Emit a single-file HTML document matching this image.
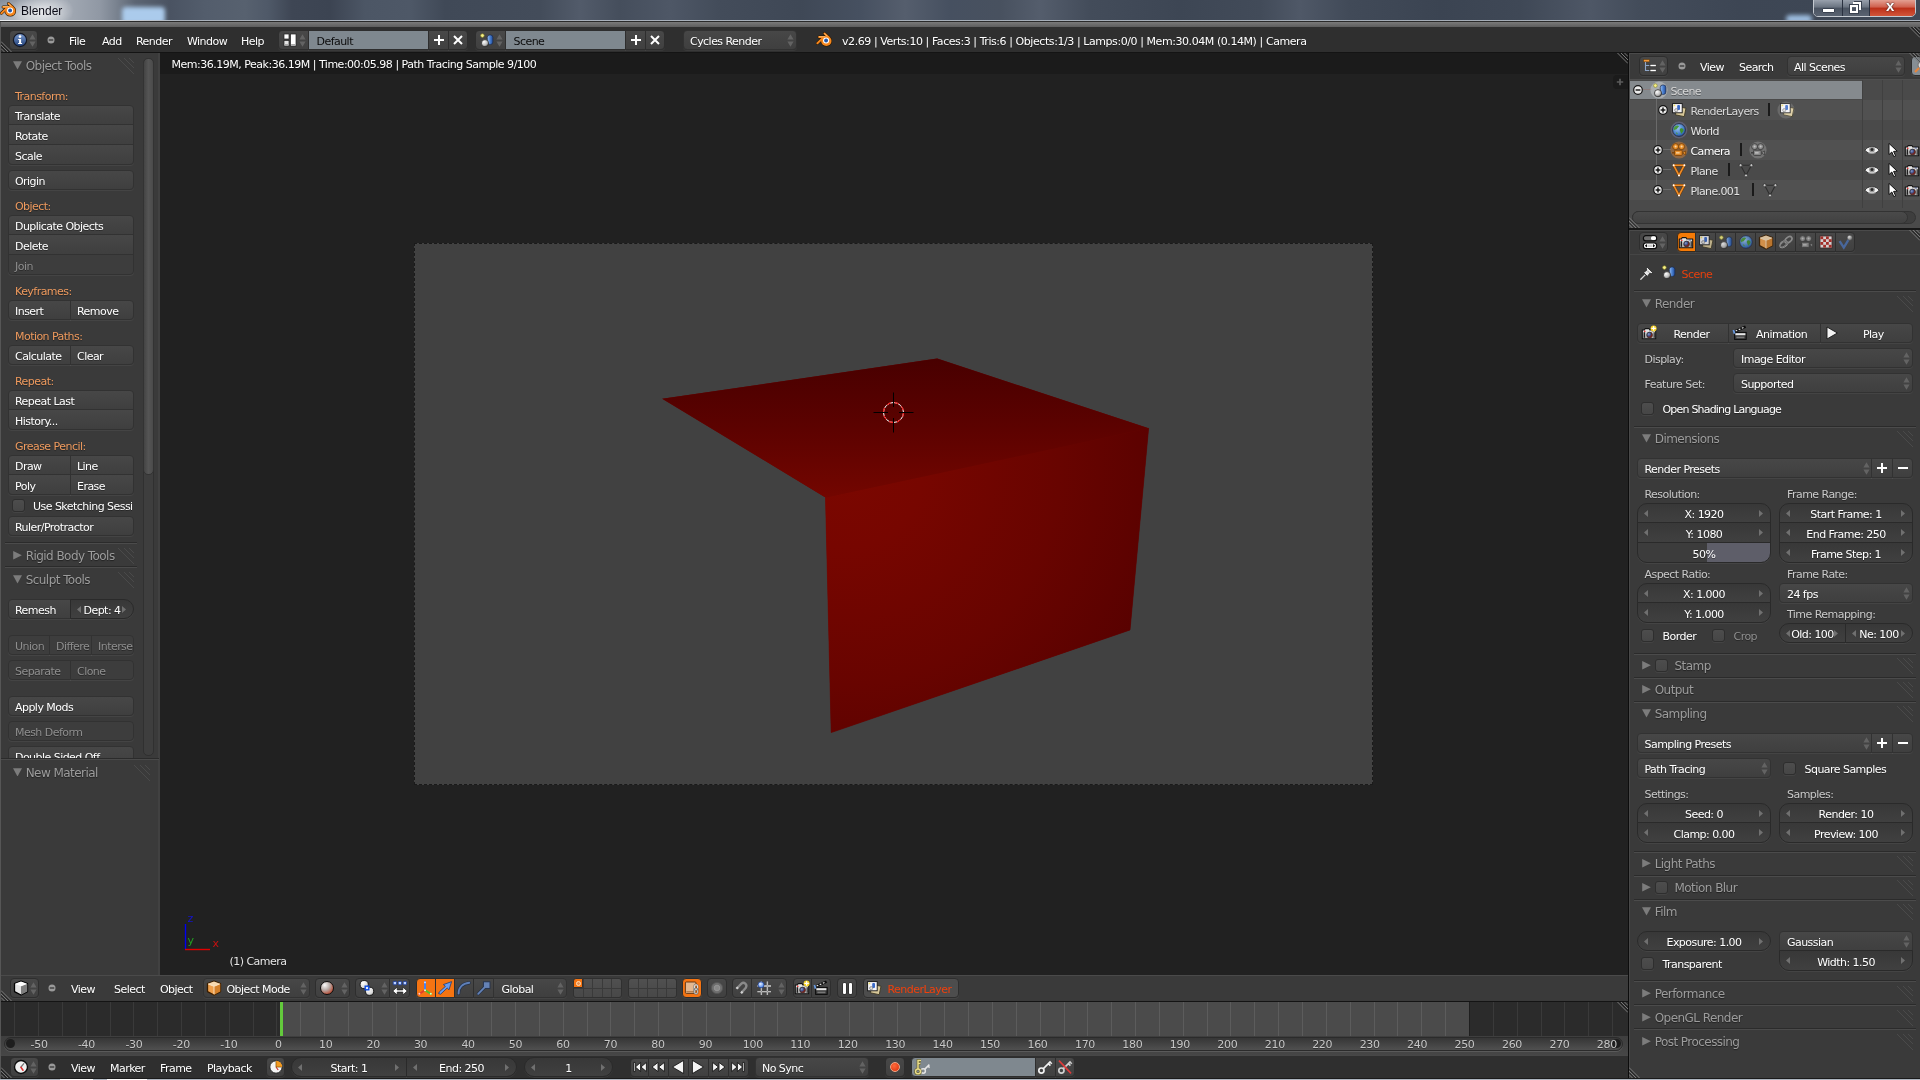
<!DOCTYPE html>
<html><head><meta charset="utf-8"><title>Blender</title>
<style>
html,body{margin:0;padding:0}
body{width:1920px;height:1080px;overflow:hidden;background:#3a3a3a;position:relative;font-family:"DejaVu Sans","Liberation Sans",sans-serif;font-size:11px;letter-spacing:-0.54px;color:#fff}
div,span,svg{position:absolute;box-sizing:border-box}
.t{white-space:pre;line-height:14px;color:#fff;text-shadow:0 1px 0 rgba(0,0,0,.35)}
.g{color:#8e8e8e}
.lab{color:#ee9a5e;text-shadow:0 1px 1px rgba(0,0,0,.4)}
.lg{color:#c9c9c9}
.pt{font-size:12px;color:#9c9c9c;letter-spacing:-0.55px;text-shadow:0 1px 1px rgba(0,0,0,.45)}
.b{border:1px solid #323232;background:linear-gradient(#474747,#3f3f3f);box-shadow:0 1px 0 rgba(255,255,255,.055);border-radius:4px}
.n{border:1px solid #2a2a2a;background:linear-gradient(#383838,#404040);box-shadow:0 1px 0 rgba(255,255,255,.055);border-radius:10px}
.hb{border:1px solid #2e2e2e;background:linear-gradient(#484848,#404040);box-shadow:0 1px 0 rgba(255,255,255,.05);border-radius:4px}
.cb{border:1px solid #2e2e2e;background:linear-gradient(#4d4d4d,#464646);box-shadow:0 1px 0 rgba(255,255,255,.05);border-radius:3px;width:13px;height:13px}
.dk{color:#0c0c0c;text-shadow:none}
.tight{letter-spacing:-0.8px}
.red{color:#f0400c;text-shadow:none}
.sep{height:2px;border-top:1px solid #2b2b2b;background:#4b4b4b}
</style></head>
<body>
<div id="root" style="left:0;top:0;width:1920px;height:1080px;will-change:transform">
<div style="left:0px;top:0px;width:1920px;height:20px;background:linear-gradient(90deg,#a9b0b9 0px,#b6bcc4 20px,#a6adb7 60px,#9098a4 100px,#7a8390 116px,#5c6573 135px,#4a5362 170px,#535d6c 205px,#57616f 245px,#4f5968 268px,#3e4654 292px,#3c4452 330px,#4c5665 365px,#4e5867 410px,#404957 445px,#414a58 480px,#434c5a 540px,#525b6a 580px,#454e5c 620px,#4e5766 670px,#434c5a 720px,#3f4856 800px,#465060 860px,#555e6d 905px,#465060 950px,#48515f 1000px,#545d6c 1040px,#434c5a 1090px,#3d4654 1180px,#424b59 1260px,#4f5867 1300px,#414a58 1350px,#3b4452 1440px,#3f4856 1520px,#4e5766 1590px,#434c5a 1640px,#3d4654 1740px,#3f4856 1920px)"></div>
<div style="left:10px;top:-8px;width:64px;height:38px;background:radial-gradient(closest-side,rgba(255,255,255,.8),rgba(255,255,255,.35) 60%,rgba(255,255,255,0));"></div>
<div style="left:122px;top:7px;width:43px;height:17px;background:#abcbec;filter:blur(2.2px);border-radius:4px"></div>
<div style="left:1786px;top:15px;width:26px;height:8px;background:#9dbde0;filter:blur(2px);border-radius:4px"></div>
<div style="left:0px;top:0px;width:70px;height:14px;background:linear-gradient(rgba(60,70,92,.34),rgba(60,70,92,0));-webkit-mask-image:linear-gradient(90deg,#000,transparent);mask-image:linear-gradient(90deg,#000,transparent)"></div>
<svg style="left:0px;top:2.2px" width="16" height="16" viewBox="0 0 16 16"><path d="M8.5 1.6L12.6 5.2M3.1 4.9H9.4M7.4 5.4L1.4 11.2" fill="none" stroke="#2a1800" stroke-width="3" stroke-linecap="round" stroke-linejoin="round"/><ellipse cx="10.3" cy="9" rx="5.8" ry="5.6" fill="#2a1800"/><path d="M8.5 1.6L12.6 5.2M3.1 4.9H9.4M7.4 5.4L1.4 11.2" fill="none" stroke="#f6871e" stroke-width="2" stroke-linecap="round" stroke-linejoin="round"/><ellipse cx="10.3" cy="9" rx="5.2" ry="5" fill="#f6871e"/><path d="M3.3 4.7H8.6M8.6 1.9L11 4" stroke="#fbc078" stroke-width="0.9" stroke-linecap="round"/><circle cx="10.1" cy="8.5" r="3.05" fill="#fff"/><circle cx="10.1" cy="8.5" r="1.95" fill="#2458a8"/></svg>
<span style="left:21px;top:3.5px;font-family:'Liberation Sans',sans-serif;font-size:12px;letter-spacing:0;color:#0b0b16;line-height:14px;white-space:pre">Blender</span>
<div style="left:1813px;top:-1px;width:103px;height:18px;border:1px solid #c4c9d0;border-radius:0 0 5px 5px;background:#2a3140"></div>
<div style="left:1814px;top:0px;width:28px;height:16px;background:linear-gradient(#98a0ac,#6a7380 45%,#4a5361 50%,#5a6371);border-radius:0 0 0 4px"></div>
<div style="left:1843px;top:0px;width:26px;height:16px;background:linear-gradient(#98a0ac,#6a7380 45%,#4a5361 50%,#5a6371)"></div>
<div style="left:1870px;top:0px;width:45px;height:16px;background:linear-gradient(#e3a092,#cf5f4c 45%,#bb2f18 50%,#d2553a);border-radius:0 0 4px 0"></div>
<div style="left:1822px;top:8px;width:13px;height:5px;background:#fff;border:1px solid #3a4250;border-radius:1px"></div>
<div style="left:1850px;top:5px;width:8px;height:8px;border:2px solid #fff;box-shadow:0 0 0 1px #3a4250"></div>
<div style="left:1853px;top:2px;width:8px;height:8px;border:2px solid #fff;border-left:none;border-bottom:none;box-shadow:1px -1px 0 0 #3a4250"></div>
<span style="left:1886px;top:-2px;font-family:'Liberation Sans',sans-serif;font-weight:bold;font-size:15px;letter-spacing:0;color:#fff;line-height:16px;text-shadow:0 0 2px #422,0 0 1px #422">x</span>
<div style="left:0px;top:20px;width:1920px;height:1px;background:linear-gradient(90deg,#eceef0,#e4e7ea 90px,#aab2bc 180px,#a3abb5)"></div>
<div style="left:0px;top:21px;width:1920px;height:1px;background:#2a2a2a"></div>
<div style="left:0px;top:22px;width:1920px;height:5px;background:linear-gradient(#7a7a7a,#5e5e5e)"></div>
<div style="left:0px;top:27px;width:1920px;height:25px;background:#2f2f2f"></div>
<div style="left:0px;top:52px;width:1920px;height:1px;background:#141414"></div>
<div style="left:0px;top:27px;width:1px;height:26px;background:#555"></div>
<div class="hb" style="left:9px;top:30px;width:29px;height:20px;"></div>
<svg style="left:29px;top:34px" width="7" height="13" viewBox="0 0 7 13"><path d="M3.5 0.2L6.6 5.4H0.4Z M3.5 12.8L6.6 7.6H0.4Z" fill="#636363"/></svg>
<svg style="left:12px;top:32px" width="16" height="16" viewBox="0 0 16 16"><defs><linearGradient id="g1" x1="0" y1="0" x2="0" y2="1"><stop offset="0" stop-color="#7b9bd0"/><stop offset="1" stop-color="#1f3f78"/></linearGradient></defs><circle cx="8" cy="8" r="6.6" fill="url(#g1)" stroke="#141824" stroke-width="1.2"/><circle cx="8" cy="4.6" r="1.3" fill="#fff"/><path d="M6.2 6.9H9.1V10.9H10.1V12H6.1V10.9H7.1V8H6.2Z" fill="#fff"/></svg>
<svg style="left:47px;top:36px" width="8" height="8" viewBox="0 0 8 8"><circle cx="4" cy="4" r="3.5" fill="#9a9a9a"/><rect x="1.8" y="3.4" width="4.4" height="1.2" fill="#2e2e2e"/></svg>
<span class="t" style="left:69px;top:34.8px;">File</span>
<span class="t" style="left:102px;top:34.8px;">Add</span>
<span class="t" style="left:136px;top:34.8px;">Render</span>
<span class="t" style="left:187px;top:34.8px;">Window</span>
<span class="t" style="left:241px;top:34.8px;">Help</span>
<div class="hb" style="left:278px;top:30px;width:31px;height:20px;border-radius:4px 0 0 4px;"></div>
<svg style="left:299px;top:34px" width="7" height="13" viewBox="0 0 7 13"><path d="M3.5 0.2L6.6 5.4H0.4Z M3.5 12.8L6.6 7.6H0.4Z" fill="#636363"/></svg>
<svg style="left:282px;top:32px" width="16" height="16" viewBox="0 0 16 16"><rect x="2" y="2" width="5" height="5" fill="#fff" stroke="#222" stroke-width="0.7"/><rect x="2" y="8.5" width="5" height="5.5" fill="#e4e4e4" stroke="#222" stroke-width="0.7"/><rect x="2.6" y="12" width="3.8" height="1.4" fill="#aaa"/><rect x="8.5" y="2" width="5.5" height="12" fill="#fff" stroke="#222" stroke-width="0.7"/><rect x="9.1" y="12" width="4.3" height="1.4" fill="#aaa"/></svg>
<div class="hb" style="left:308px;top:30px;width:121px;height:20px;background:#7f888f;border-radius:0;"></div>
<span class="t dk" style="left:316.5px;top:34.8px;">Default</span>
<div class="hb" style="left:428px;top:30px;width:21px;height:20px;border-radius:0;"></div>
<div class="hb" style="left:448px;top:30px;width:20px;height:20px;border-radius:0 4px 4px 0;"></div>
<svg style="left:432.5px;top:34px" width="12" height="12" viewBox="0 0 12 12"><path d="M6 1V11M1 6H11" stroke="#fff" stroke-width="2"/></svg>
<svg style="left:452px;top:34px" width="12" height="12" viewBox="0 0 12 12"><path d="M2 2L10 10M10 2L2 10" stroke="#fff" stroke-width="2"/></svg>
<div class="hb" style="left:475px;top:30px;width:31px;height:20px;border-radius:4px 0 0 4px;"></div>
<svg style="left:496px;top:34px" width="7" height="13" viewBox="0 0 7 13"><path d="M3.5 0.2L6.6 5.4H0.4Z M3.5 12.8L6.6 7.6H0.4Z" fill="#636363"/></svg>
<svg style="left:478.5px;top:32px" width="16" height="16" viewBox="0 0 16 16"><defs><radialGradient id="g2" cx="0.35" cy="0.3" r="0.8"><stop offset="0" stop-color="#fff"/><stop offset="0.6" stop-color="#bbb"/><stop offset="1" stop-color="#444"/></radialGradient><linearGradient id="g3" x1="0" y1="0" x2="1" y2="0"><stop offset="0" stop-color="#9cc0f0"/><stop offset="0.5" stop-color="#4a80d0"/><stop offset="1" stop-color="#1f4a9a"/></linearGradient></defs><rect x="8.3" y="3" width="5.6" height="9.4" rx="2.4" fill="url(#g3)" stroke="#1a2a4a" stroke-width="0.7"/><circle cx="6" cy="11.2" r="3.6" fill="url(#g2)" stroke="#222" stroke-width="0.7"/><circle cx="3.4" cy="3.6" r="1.8" fill="#f6f08a" stroke="#8a8420" stroke-width="0.6"/></svg>
<div class="hb" style="left:505px;top:30px;width:121px;height:20px;background:#7f888f;border-radius:0;"></div>
<span class="t dk" style="left:513.5px;top:34.8px;">Scene</span>
<div class="hb" style="left:625px;top:30px;width:21px;height:20px;border-radius:0;"></div>
<div class="hb" style="left:645px;top:30px;width:20px;height:20px;border-radius:0 4px 4px 0;"></div>
<svg style="left:629.5px;top:34px" width="12" height="12" viewBox="0 0 12 12"><path d="M6 1V11M1 6H11" stroke="#fff" stroke-width="2"/></svg>
<svg style="left:649px;top:34px" width="12" height="12" viewBox="0 0 12 12"><path d="M2 2L10 10M10 2L2 10" stroke="#fff" stroke-width="2"/></svg>
<div class="b" style="left:683px;top:30px;width:114px;height:20px;"></div>
<span class="t" style="left:690px;top:34.8px;">Cycles Render</span>
<svg style="left:787px;top:34.0px" width="7" height="13" viewBox="0 0 7 13"><path d="M3.5 0.2L6.6 5.4H0.4Z M3.5 12.8L6.6 7.6H0.4Z" fill="#636363"/></svg>
<svg style="left:816px;top:32px" width="16" height="16" viewBox="0 0 16 16"><path d="M8.5 1.6L12.6 5.2M3.1 4.9H9.4M7.4 5.4L1.4 11.2" fill="none" stroke="#2a1800" stroke-width="3" stroke-linecap="round" stroke-linejoin="round"/><ellipse cx="10.3" cy="9" rx="5.8" ry="5.6" fill="#2a1800"/><path d="M8.5 1.6L12.6 5.2M3.1 4.9H9.4M7.4 5.4L1.4 11.2" fill="none" stroke="#f6871e" stroke-width="2" stroke-linecap="round" stroke-linejoin="round"/><ellipse cx="10.3" cy="9" rx="5.2" ry="5" fill="#f6871e"/><path d="M3.3 4.7H8.6M8.6 1.9L11 4" stroke="#fbc078" stroke-width="0.9" stroke-linecap="round"/><circle cx="10.1" cy="8.5" r="3.05" fill="#fff"/><circle cx="10.1" cy="8.5" r="1.95" fill="#2458a8"/></svg>
<span class="t" style="left:842px;top:34.8px;letter-spacing:-0.43px">v2.69 | Verts:10 | Faces:3 | Tris:6 | Objects:1/3 | Lamps:0/0 | Mem:30.04M (0.14M) | Camera</span>
<div style="left:0px;top:53px;width:160px;height:922px;background:#3a3a3a"></div>
<div style="left:0px;top:53px;width:1px;height:922px;background:#555"></div>
<div style="left:158px;top:53px;width:2px;height:922px;background:#414141"></div>
<div style="left:143px;top:58px;width:11px;height:698px;border:1px solid #303030;border-radius:5px;background:#3e3e3e"></div>
<div style="left:143px;top:58px;width:11px;height:417px;background:linear-gradient(90deg,#444,#555 50%,#4a4a4a);border:1px solid #333;border-radius:5px"></div>
<svg style="left:13px;top:61px" width="9" height="8.6" viewBox="0 0 9 9" preserveAspectRatio="none"><path d="M0 0.2H9L4.5 8.9Z" fill="#7c7c7c"/></svg>
<span class="t pt" style="left:25.7px;top:59.3px;">Object Tools</span>
<svg style="left:118px;top:58px" width="16" height="16" viewBox="0 0 16 16"><path d="M0 0L16 16M6 0L16 10M11 0L16 5" stroke="#4a4a4a" stroke-width="1" fill="none"/></svg>
<span class="t lab" style="left:15px;top:89.8px;">Transform:</span>
<div class="b" style="left:8px;top:105px;width:126px;height:20px;border-radius:4px 4px 0 0;"></div>
<span class="t" style="left:15px;top:109.8px;">Translate</span>
<div class="b" style="left:8px;top:124px;width:126px;height:21px;border-radius:0;"></div>
<span class="t" style="left:15px;top:129.8px;">Rotate</span>
<div class="b" style="left:8px;top:144px;width:126px;height:21px;border-radius:0 0 4px 4px;"></div>
<span class="t" style="left:15px;top:149.8px;">Scale</span>
<div class="b" style="left:8px;top:170px;width:126px;height:20px;border-radius:4px;"></div>
<span class="t" style="left:15px;top:174.8px;">Origin</span>
<span class="t lab" style="left:15px;top:199.8px;">Object:</span>
<div class="b" style="left:8px;top:215px;width:126px;height:20px;border-radius:4px 4px 0 0;"></div>
<span class="t" style="left:15px;top:219.8px;">Duplicate Objects</span>
<div class="b" style="left:8px;top:234px;width:126px;height:21px;border-radius:0;"></div>
<span class="t" style="left:15px;top:239.8px;">Delete</span>
<div class="b" style="left:8px;top:254px;width:126px;height:21px;background:#3d3d3d;border-radius:0 0 4px 4px;"></div>
<span class="t g" style="left:15px;top:259.8px;">Join</span>
<span class="t lab" style="left:15px;top:284.8px;">Keyframes:</span>
<div class="b" style="left:8px;top:300px;width:63px;height:20px;border-radius:4px 0 0 4px;"></div>
<span class="t" style="left:15px;top:304.8px;">Insert</span>
<div class="b" style="left:70px;top:300px;width:64px;height:20px;border-radius:0 4px 4px 0;"></div>
<span class="t" style="left:77px;top:304.8px;">Remove</span>
<span class="t lab" style="left:15px;top:329.8px;">Motion Paths:</span>
<div class="b" style="left:8px;top:345px;width:63px;height:20px;border-radius:4px 0 0 4px;"></div>
<span class="t" style="left:15px;top:349.8px;">Calculate</span>
<div class="b" style="left:70px;top:345px;width:64px;height:20px;border-radius:0 4px 4px 0;"></div>
<span class="t" style="left:77px;top:349.8px;">Clear</span>
<span class="t lab" style="left:15px;top:374.8px;">Repeat:</span>
<div class="b" style="left:8px;top:390px;width:126px;height:20px;border-radius:4px 4px 0 0;"></div>
<span class="t" style="left:15px;top:394.8px;">Repeat Last</span>
<div class="b" style="left:8px;top:409px;width:126px;height:21px;border-radius:0 0 4px 4px;"></div>
<span class="t" style="left:15px;top:414.8px;">History...</span>
<span class="t lab" style="left:15px;top:439.8px;">Grease Pencil:</span>
<div class="b" style="left:8px;top:455px;width:63px;height:20px;border-radius:4px 0 0 0;"></div>
<span class="t" style="left:15px;top:459.8px;">Draw</span>
<div class="b" style="left:70px;top:455px;width:64px;height:20px;border-radius:0 4px 0 0;"></div>
<span class="t" style="left:77px;top:459.8px;">Line</span>
<div class="b" style="left:8px;top:474px;width:63px;height:21px;border-radius:0 0 0 4px;"></div>
<span class="t" style="left:15px;top:479.8px;">Poly</span>
<div class="b" style="left:70px;top:474px;width:64px;height:21px;border-radius:0 0 4px 0;"></div>
<span class="t" style="left:77px;top:479.8px;">Erase</span>
<div style="left:0;top:495px;width:132px;height:20px;overflow:hidden">
<div class="cb" style="left:12px;top:4px;width:13px;height:13px;"></div>
<span class="t" style="left:33px;top:4.800000000000001px;">Use Sketching Sessions</span>
</div>
<div class="b" style="left:8px;top:516px;width:126px;height:20px;border-radius:4px;"></div>
<span class="t" style="left:15px;top:520.8px;">Ruler/Protractor</span>
<div class="sep" style="left:5px;top:542px;width:132px;height:2px;"></div>
<svg style="left:13px;top:551px" width="9" height="8.6" viewBox="0 0 9 9" preserveAspectRatio="none"><path d="M0.2 0V9L8.9 4.5Z" fill="#7c7c7c"/></svg>
<span class="t pt" style="left:25.7px;top:549.3px;">Rigid Body Tools</span>
<svg style="left:118px;top:548px" width="16" height="16" viewBox="0 0 16 16"><path d="M0 0L16 16M6 0L16 10M11 0L16 5" stroke="#4a4a4a" stroke-width="1" fill="none"/></svg>
<div class="sep" style="left:5px;top:566px;width:132px;height:2px;"></div>
<svg style="left:13px;top:575px" width="9" height="8.6" viewBox="0 0 9 9" preserveAspectRatio="none"><path d="M0 0.2H9L4.5 8.9Z" fill="#7c7c7c"/></svg>
<span class="t pt" style="left:25.7px;top:573.3px;">Sculpt Tools</span>
<svg style="left:118px;top:572px" width="16" height="16" viewBox="0 0 16 16"><path d="M0 0L16 16M6 0L16 10M11 0L16 5" stroke="#4a4a4a" stroke-width="1" fill="none"/></svg>
<div class="b" style="left:8px;top:599px;width:63px;height:20px;border-radius:4px 0 0 4px;"></div>
<span class="t" style="left:15px;top:603.8px;">Remesh</span>
<div class="n" style="left:70px;top:599px;width:64px;height:20px;border-radius:0 10px 10px 0;"></div>
<span class="t" style="left:70px;top:603.8px;width:64px;text-align:center">Dept: 4</span>
<svg style="left:77px;top:605.5px" width="4" height="7" viewBox="0 0 4 7"><path d="M4 0L0 3.5L4 7Z" fill="#707070"/></svg>
<svg style="left:122px;top:605.5px" width="4" height="7" viewBox="0 0 4 7"><path d="M0 0L4 3.5L0 7Z" fill="#707070"/></svg>
<div class="b" style="left:8px;top:635px;width:42px;height:20px;background:#3d3d3d;border-radius:4px 0 0 4px;"></div>
<span class="t g" style="left:15px;top:639.8px;">Union</span>
<div class="b" style="left:49px;top:635px;width:43px;height:20px;background:#3d3d3d;border-radius:0;"></div>
<span class="t g" style="left:56px;top:639.8px;">Differe</span>
<div class="b" style="left:91px;top:635px;width:43px;height:20px;background:#3d3d3d;border-radius:0 4px 4px 0;"></div>
<span class="t g" style="left:98px;top:639.8px;">Interse</span>
<div class="b" style="left:8px;top:660px;width:63px;height:20px;background:#3d3d3d;border-radius:4px 0 0 4px;"></div>
<span class="t g" style="left:15px;top:664.8px;">Separate</span>
<div class="b" style="left:70px;top:660px;width:64px;height:20px;background:#3d3d3d;border-radius:0 4px 4px 0;"></div>
<span class="t g" style="left:77px;top:664.8px;">Clone</span>
<div class="b" style="left:8px;top:696px;width:126px;height:20px;border-radius:4px;"></div>
<span class="t" style="left:15px;top:700.8px;">Apply Mods</span>
<div class="b" style="left:8px;top:721px;width:126px;height:20px;background:#3d3d3d;border-radius:4px;"></div>
<span class="t g" style="left:15px;top:725.8px;">Mesh Deform</span>
<div style="left:0;top:740px;width:140px;height:18px;overflow:hidden">
<div class="b" style="left:8px;top:6px;width:126px;height:20px;"></div>
<span class="t" style="left:15px;top:10.8px;">Double Sided Off</span>
</div>
<div style="left:1px;top:758px;width:158px;height:1px;background:#2b2b2b"></div>
<div style="left:1px;top:759px;width:158px;height:1px;background:#4a4a4a"></div>
<svg style="left:13px;top:767.7px" width="9" height="8.6" viewBox="0 0 9 9" preserveAspectRatio="none"><path d="M0 0.2H9L4.5 8.9Z" fill="#7c7c7c"/></svg>
<span class="t pt" style="left:25.7px;top:766.0px;">New Material</span>
<svg style="left:134px;top:764.7px" width="16" height="16" viewBox="0 0 16 16"><path d="M0 0L16 16M6 0L16 10M11 0L16 5" stroke="#4a4a4a" stroke-width="1" fill="none"/></svg>
<div style="left:160px;top:53px;width:1468px;height:922px;background:#212121"></div>
<div style="left:160px;top:53px;width:1468px;height:21px;background:#1b1b1b"></div>
<span class="t" style="left:171.5px;top:57.8px;letter-spacing:-0.49px">Mem:36.19M, Peak:36.19M | Time:00:05.98 | Path Tracing Sample 9/100</span>
<div style="left:1628px;top:53px;width:1px;height:1026px;background:#0c0c0c"></div>
<div style="left:414px;top:243px;width:959px;height:542px;background:#414141;border:1px dashed #1a1a1a"></div>
<svg style="left:0;top:0" width="1920" height="1080" viewBox="0 0 1920 1080"><defs><linearGradient id="gt" gradientUnits="userSpaceOnUse" x1="900" y1="358" x2="900" y2="497"><stop offset="0" stop-color="#480000"/><stop offset="0.5" stop-color="#5c0200"/><stop offset="1" stop-color="#730600"/></linearGradient><radialGradient id="gf" gradientUnits="userSpaceOnUse" cx="845" cy="470" r="390"><stop offset="0" stop-color="#7b0700"/><stop offset="0.2" stop-color="#770600"/><stop offset="0.55" stop-color="#680400"/><stop offset="0.85" stop-color="#580100"/><stop offset="1" stop-color="#500000"/></radialGradient></defs><polygon points="662.2,398.8 937.2,358.5 1148.6,428.3 1130,630 831.2,732.6 825.5,497.5" fill="#6c0400"/><polygon points="825.5,497.5 1148.6,428.3 1130,630 831.2,732.6" fill="url(#gf)" stroke="url(#gf)" stroke-width="0.6"/><polygon points="662.2,398.8 937.2,358.5 1148.6,428.3 825.5,497.5" fill="url(#gt)"/><circle cx="893.5" cy="412.5" r="10" fill="none" stroke="#fff" stroke-width="1"/><circle cx="893.5" cy="412.5" r="10" fill="none" stroke="#f00" stroke-width="1" stroke-dasharray="4 4"/><path d="M873.5 412.5H888M899 412.5H913.5M893.5 392.5V407M893.5 418V432.5" stroke="#000" stroke-width="1"/><path d="M185.5 949V924" stroke="#0000f0" stroke-width="1.4"/><path d="M185 949.5H210" stroke="#e00000" stroke-width="1.4"/></svg>
<span class="t" style="left:187.5px;top:912px;color:#1414d0;text-shadow:none">z</span>
<span class="t" style="left:187.5px;top:934px;color:#22a022;text-shadow:none">y</span>
<span class="t" style="left:212.5px;top:936.7px;color:#c81010;text-shadow:none">x</span>
<span class="t" style="left:229.5px;top:954.8px;color:#e6e6e6">(1) Camera</span>
<div style="left:1613px;top:75px;width:15px;height:14px;background:#1b1b1b;border-radius:4px 0 0 4px"></div>
<svg style="left:1616px;top:78px" width="8" height="8" viewBox="0 0 8 8"><path d="M4 0.8V7.2M0.8 4H7.2" stroke="#5c5c5c" stroke-width="1.7"/></svg>
<div style="left:0px;top:975px;width:1628px;height:26px;background:#3a3a3a;border-top:1px solid #4a4a4a"></div>
<div style="left:0px;top:1001px;width:1628px;height:1px;background:#141414"></div>
<div class="hb" style="left:10px;top:978px;width:29px;height:20px;"></div>
<svg style="left:29.5px;top:982px" width="7" height="13" viewBox="0 0 7 13"><path d="M3.5 0.2L6.6 5.4H0.4Z M3.5 12.8L6.6 7.6H0.4Z" fill="#636363"/></svg>
<svg style="left:13px;top:980px" width="16" height="16" viewBox="0 0 16 16"><path d="M1.5 3.6L8 1.2L14.5 3.6V11.6L8 15L1.5 11.6Z" fill="#e4e4e4" stroke="#000" stroke-width="1.3" stroke-linejoin="round"/><path d="M8 6.2L14.3 3.8V11.4L8 14.7Z" fill="#7e7e7e"/><path d="M1.9 3.7L8 1.5L14.1 3.7L8 6.2Z" fill="#ffffff"/></svg>
<svg style="left:48px;top:984px" width="8" height="8" viewBox="0 0 8 8"><circle cx="4" cy="4" r="3.5" fill="#9a9a9a"/><rect x="1.8" y="3.4" width="4.4" height="1.2" fill="#2e2e2e"/></svg>
<span class="t" style="left:71px;top:982.8px;">View</span>
<span class="t" style="left:114px;top:982.8px;">Select</span>
<span class="t" style="left:160px;top:982.8px;">Object</span>
<div class="b" style="left:203px;top:978px;width:107px;height:20px;"></div>
<span class="t" style="left:226.5px;top:982.8px;">Object Mode</span>
<svg style="left:300px;top:982.0px" width="7" height="13" viewBox="0 0 7 13"><path d="M3.5 0.2L6.6 5.4H0.4Z M3.5 12.8L6.6 7.6H0.4Z" fill="#636363"/></svg>
<svg style="left:206.3px;top:980px" width="16" height="16" viewBox="0 0 16 16"><path d="M1.5 3.6L8 1.2L14.5 3.6V11.6L8 15L1.5 11.6Z" fill="#f0a04c" stroke="#3a1e00" stroke-width="1.3" stroke-linejoin="round"/><path d="M8 6.2L14.3 3.8V11.4L8 14.7Z" fill="#d4802a"/><path d="M1.9 3.7L8 1.5L14.1 3.7L8 6.2Z" fill="#f7d9b0"/><path d="M2.2 4L8 6.3L13.8 4M8 6.3V14.3" fill="none" stroke="#fbe6c8" stroke-width="0.9"/></svg>
<div class="hb" style="left:315px;top:978px;width:35px;height:20px;"></div>
<svg style="left:340.5px;top:982px" width="7" height="13" viewBox="0 0 7 13"><path d="M3.5 0.2L6.6 5.4H0.4Z M3.5 12.8L6.6 7.6H0.4Z" fill="#636363"/></svg>
<svg style="left:319px;top:980px" width="16" height="16" viewBox="0 0 16 16"><defs><radialGradient id="g4" cx="0.33" cy="0.28" r="0.85"><stop offset="0" stop-color="#fafafa"/><stop offset="0.45" stop-color="#b8aca8"/><stop offset="0.85" stop-color="#b8503a"/><stop offset="1" stop-color="#c8702a"/></radialGradient></defs><circle cx="8" cy="8" r="6.5" fill="url(#g4)" stroke="#0c0c0c" stroke-width="1"/></svg>
<div class="hb" style="left:355px;top:978px;width:35px;height:20px;border-radius:4px 0 0 4px;"></div>
<svg style="left:380.5px;top:982px" width="7" height="13" viewBox="0 0 7 13"><path d="M3.5 0.2L6.6 5.4H0.4Z M3.5 12.8L6.6 7.6H0.4Z" fill="#636363"/></svg>
<svg style="left:358.5px;top:980px" width="16" height="16" viewBox="0 0 16 16"><defs><radialGradient id="g5" cx="0.35" cy="0.3" r="0.8"><stop offset="0" stop-color="#fff"/><stop offset="0.7" stop-color="#d8d8d8"/><stop offset="1" stop-color="#999"/></radialGradient></defs><circle cx="5.2" cy="4.6" r="4.1" fill="url(#g5)" stroke="#111" stroke-width="0.9"/><circle cx="10.6" cy="11.3" r="4.1" fill="url(#g5)" stroke="#111" stroke-width="0.9"/><rect x="6.2" y="6.2" width="3.6" height="3.6" fill="#dfe9ff" stroke="#0a4ae0" stroke-width="1.4"/></svg>
<div class="hb" style="left:389px;top:978px;width:21px;height:20px;border-radius:0 4px 4px 0;"></div>
<svg style="left:391.5px;top:980px" width="16" height="16" viewBox="0 0 16 16"><rect x="1.2" y="1.4" width="3.4" height="3.4" rx="0.8" fill="#bcd2ff" stroke="#1a3a9a" stroke-width="0.9"/><rect x="6.2" y="1.4" width="3.4" height="3.4" rx="0.8" fill="#bcd2ff" stroke="#1a3a9a" stroke-width="0.9"/><rect x="11.2" y="1.4" width="3.4" height="3.4" rx="0.8" fill="#bcd2ff" stroke="#1a3a9a" stroke-width="0.9"/><path d="M0.8 11L5.2 7V9.9H10.8V7L15.2 11L10.8 15V12.1H5.2V15Z" fill="#fff" stroke="#1a1a1a" stroke-width="0.7" stroke-linejoin="round"/></svg>
<div class="hb" style="left:416px;top:978px;width:20px;height:20px;background:#f57412;border-radius:4px 0 0 4px;"></div>
<div class="hb" style="left:435px;top:978px;width:20px;height:20px;background:#f57412;border-radius:0;"></div>
<div class="hb" style="left:454px;top:978px;width:20px;height:20px;border-radius:0;"></div>
<div class="hb" style="left:473px;top:978px;width:21px;height:20px;border-radius:0;"></div>
<svg style="left:417px;top:980px" width="16" height="16" viewBox="0 0 16 16"><path d="M8 10.2V2" stroke="#4a82f0" stroke-width="2" stroke-linecap="round"/><path d="M8 10.2L2.2 14" stroke="#e0402a" stroke-width="2" stroke-linecap="round"/><path d="M8 10.2L14 14" stroke="#4ec02a" stroke-width="2" stroke-linecap="round"/><circle cx="8" cy="2.4" r="0.9" fill="#d8e6ff"/><circle cx="2.4" cy="13.8" r="1" fill="#ffd0c8"/><circle cx="13.8" cy="13.8" r="1" fill="#d8ffc8"/><circle cx="8" cy="10.2" r="1" fill="#f4f0d0"/></svg>
<svg style="left:436.8px;top:980px" width="16" height="16" viewBox="0 0 16 16"><path d="M1.6 13.6L2.2 12L8.4 6.4L6.4 4.6L14.6 1.6L12 9.8L10.2 8L3.6 14.2Z" fill="#6a9cee" stroke="#1e3a70" stroke-width="0.8" stroke-linejoin="round"/></svg>
<svg style="left:456px;top:980px" width="16" height="16" viewBox="0 0 16 16"><path d="M2.6 13.6C2.6 7.6 6.4 3.4 13.2 2.8" fill="none" stroke="#22304a" stroke-width="3.2" stroke-linecap="round"/><path d="M2.6 13.6C2.6 7.6 6.4 3.4 13.2 2.8" fill="none" stroke="#5f80b8" stroke-width="1.9" stroke-linecap="round"/></svg>
<svg style="left:475.5px;top:980px" width="16" height="16" viewBox="0 0 16 16"><path d="M2.2 13.8L8.6 7.4" stroke="#22304a" stroke-width="3" stroke-linecap="round"/><rect x="7.4" y="1.8" width="6.6" height="6.6" fill="#6482b6" stroke="#22304a" stroke-width="0.9"/><path d="M2.2 13.8L8.6 7.4" stroke="#6482b6" stroke-width="1.8" stroke-linecap="round"/></svg>
<div class="b" style="left:493px;top:978px;width:74px;height:20px;border-radius:0 4px 4px 0;"></div>
<span class="t" style="left:501.5px;top:982.8px;">Global</span>
<svg style="left:557px;top:982.0px" width="7" height="13" viewBox="0 0 7 13"><path d="M3.5 0.2L6.6 5.4H0.4Z M3.5 12.8L6.6 7.6H0.4Z" fill="#636363"/></svg>
<div style="left:573px;top:978px;width:49px;height:20px;border:1px solid #303030;border-radius:3px;background:linear-gradient(#505050,#484848);box-shadow:0 1px 0 rgba(255,255,255,.05)"></div>
<div style="left:583px;top:979px;width:1px;height:18px;background:#3a3a3a"></div>
<div style="left:592px;top:979px;width:1px;height:18px;background:#3a3a3a"></div>
<div style="left:602px;top:979px;width:1px;height:18px;background:#3a3a3a"></div>
<div style="left:611px;top:979px;width:1px;height:18px;background:#3a3a3a"></div>
<div style="left:574px;top:988px;width:47px;height:1px;background:#3a3a3a"></div>
<div style="left:628px;top:978px;width:49px;height:20px;border:1px solid #303030;border-radius:3px;background:linear-gradient(#505050,#484848);box-shadow:0 1px 0 rgba(255,255,255,.05)"></div>
<div style="left:638px;top:979px;width:1px;height:18px;background:#3a3a3a"></div>
<div style="left:647px;top:979px;width:1px;height:18px;background:#3a3a3a"></div>
<div style="left:657px;top:979px;width:1px;height:18px;background:#3a3a3a"></div>
<div style="left:666px;top:979px;width:1px;height:18px;background:#3a3a3a"></div>
<div style="left:629px;top:988px;width:47px;height:1px;background:#3a3a3a"></div>
<div style="left:573px;top:978px;width:10px;height:10px;background:#f57412;border:1px solid #303030;border-radius:3px 0 0 0"></div>
<div style="left:575.5px;top:980.5px;width:5px;height:5px;border:1px solid #ffe0b8;border-radius:2.5px;background:#e89050"></div>
<div class="hb" style="left:682px;top:978px;width:20px;height:20px;background:#f57412;"></div>
<svg style="left:684px;top:980px" width="16" height="16" viewBox="0 0 16 16"><rect x="1.4" y="2" width="10.6" height="11.4" rx="1" fill="#e4b890" stroke="#5a3010" stroke-width="0.9"/><rect x="2.4" y="11" width="8.6" height="1.4" fill="#b88050"/><ellipse cx="12" cy="7.2" rx="1.8" ry="2.6" fill="none" stroke="#e8e8e8" stroke-width="1.3"/><ellipse cx="12" cy="11.2" rx="1.8" ry="2.6" fill="none" stroke="#c8c8c8" stroke-width="1.3"/><ellipse cx="12" cy="7.2" rx="2.5" ry="3.3" fill="none" stroke="#333" stroke-width="0.4"/><ellipse cx="12" cy="11.2" rx="2.5" ry="3.3" fill="none" stroke="#333" stroke-width="0.4"/></svg>
<div class="hb" style="left:707px;top:978px;width:20px;height:20px;"></div>
<svg style="left:709px;top:980px" width="16" height="16" viewBox="0 0 16 16"><circle cx="8" cy="8" r="5.6" fill="#6e6e6e" stroke="#555" stroke-width="0.8"/><circle cx="8" cy="8" r="2.8" fill="#888" stroke="#999" stroke-width="0.8"/></svg>
<div class="hb" style="left:732px;top:978px;width:20px;height:20px;border-radius:4px 0 0 4px;"></div>
<svg style="left:734px;top:980px" width="16" height="16" viewBox="0 0 16 16"><path d="M3 8.2L7.4 3.6C10 1.4 13.8 4.6 11.8 7.8L7.6 12.6" fill="none" stroke="#8a8a8a" stroke-width="2.3" stroke-linecap="butt"/><path d="M2.4 8.8L4 7.2M7 13.2L8.6 11.6" stroke="#cfcfcf" stroke-width="2.3"/></svg>
<div class="hb" style="left:751px;top:978px;width:36px;height:20px;border-radius:0 4px 4px 0;"></div>
<svg style="left:777.5px;top:982px" width="7" height="13" viewBox="0 0 7 13"><path d="M3.5 0.2L6.6 5.4H0.4Z M3.5 12.8L6.6 7.6H0.4Z" fill="#636363"/></svg>
<svg style="left:755.5px;top:980px" width="16" height="16" viewBox="0 0 16 16"><defs><radialGradient id="g6" cx="0.4" cy="0.35" r="0.7"><stop offset="0" stop-color="#e8f0ff"/><stop offset="1" stop-color="#3a7ae8"/></radialGradient></defs><path d="M5.4 1.6V15M11.4 1.6V15M1.4 6H15M1.4 11.6H15" stroke="#f0f0f0" stroke-width="1.3"/><path d="M5.4 1.6V15M11.4 1.6V15M1.4 6H15M1.4 11.6H15" stroke="#222" stroke-width="0.3"/><circle cx="5" cy="4.8" r="3" fill="url(#g6)" stroke="#1a3a88" stroke-width="0.7"/></svg>
<div class="hb" style="left:793px;top:978px;width:19px;height:20px;border-radius:4px 0 0 4px;"></div>
<svg style="left:794px;top:980px" width="16" height="16" viewBox="0 0 16 16"><defs><radialGradient id="g7" cx="0.35" cy="0.35" r="0.75"><stop offset="0" stop-color="#8a9ad0"/><stop offset="0.45" stop-color="#3a4a80"/><stop offset="0.7" stop-color="#7a2018"/><stop offset="1" stop-color="#d03828"/></radialGradient><linearGradient id="g8" x1="0" y1="0" x2="0" y2="1"><stop offset="0" stop-color="#f4f4f4"/><stop offset="1" stop-color="#a8a8a8"/></linearGradient></defs><path d="M1.3 5H3.4L4.2 3.6H8L8.8 5H14.7V13.7H1.3Z" fill="url(#g8)" stroke="#141414" stroke-width="1.1" stroke-linejoin="round"/><rect x="2.6" y="7.2" width="1.5" height="5.6" fill="#1e1e1e"/><rect x="12.6" y="7.2" width="1.2" height="5.6" fill="#2a2a2a"/><rect x="10.6" y="5.4" width="2.6" height="1" fill="#3a4a7a"/><circle cx="8.6" cy="10" r="2.9" fill="url(#g7)" stroke="#2a2a2a" stroke-width="0.7"/><circle cx="3.8" cy="6.2" r="0.8" fill="#f01818"/><circle cx="12.6" cy="3.4" r="3" fill="#f5d020"/><path d="M12.6 1.2V5.6M10.4 3.4H14.8" stroke="#fff" stroke-width="1.2"/></svg>
<div class="hb" style="left:811px;top:978px;width:20px;height:20px;border-radius:0 4px 4px 0;"></div>
<svg style="left:813px;top:980px" width="16" height="16" viewBox="0 0 16 16"><rect x="2.6" y="7.4" width="11.6" height="7" fill="#3a3a3a" stroke="#0c0c0c" stroke-width="1"/><rect x="3.4" y="8.2" width="10" height="2" fill="#e8e8e8"/><rect x="4.4" y="11.6" width="8" height="1.6" fill="#777"/><path d="M2.4 6.6L13.6 1.6" stroke="#0c0c0c" stroke-width="2.6"/><path d="M3.6 6L12.8 2" stroke="#e8e8e8" stroke-width="1.2" stroke-dasharray="1.8 1.6"/><path d="M1.4 5L2.6 8.6" stroke="#6a9ae0" stroke-width="1.8"/></svg>
<div class="hb" style="left:837px;top:978px;width:20px;height:20px;"></div>
<div style="left:843px;top:982.5px;width:3px;height:11px;background:#fff;border-radius:1px;box-shadow:0 0 0 .5px #222"></div>
<div style="left:849px;top:982.5px;width:3px;height:11px;background:#fff;border-radius:1px;box-shadow:0 0 0 .5px #222"></div>
<div class="hb" style="left:863px;top:978px;width:96px;height:20px;background:#4d4d4d;"></div>
<span class="t red" style="left:887.5px;top:982.8px;">RenderLayer</span>
<svg style="left:866px;top:980px" width="16" height="16" viewBox="0 0 16 16"><rect x="5.2" y="5.2" width="9" height="8.6" fill="#d8c89a" stroke="#3a3420" stroke-width="0.8" transform="rotate(12 9.7 9.5)"/><rect x="1.6" y="1.6" width="9.6" height="9.2" fill="#f4f4f8" stroke="#111" stroke-width="0.9"/><rect x="6.2" y="3" width="2.8" height="5" rx="1" fill="#3a6ac8"/><circle cx="5.2" cy="8.2" r="1.6" fill="#ddd" stroke="#555" stroke-width="0.5"/><circle cx="3.4" cy="3.4" r="0.9" fill="#f0e060"/></svg>
<div style="left:0px;top:1002px;width:1628px;height:34px;background:#2b2b2b"></div>
<div style="left:281px;top:1002px;width:1188px;height:34px;background:#4b4b4b"></div>
<div style="left:14px;top:1002px;width:1px;height:34px;background:#3a3a3a"></div>
<div style="left:38px;top:1002px;width:1px;height:34px;background:#3a3a3a"></div>
<div style="left:62px;top:1002px;width:1px;height:34px;background:#3a3a3a"></div>
<div style="left:86px;top:1002px;width:1px;height:34px;background:#3a3a3a"></div>
<div style="left:110px;top:1002px;width:1px;height:34px;background:#3a3a3a"></div>
<div style="left:133px;top:1002px;width:1px;height:34px;background:#3a3a3a"></div>
<div style="left:157px;top:1002px;width:1px;height:34px;background:#3a3a3a"></div>
<div style="left:181px;top:1002px;width:1px;height:34px;background:#3a3a3a"></div>
<div style="left:205px;top:1002px;width:1px;height:34px;background:#3a3a3a"></div>
<div style="left:229px;top:1002px;width:1px;height:34px;background:#3a3a3a"></div>
<div style="left:253px;top:1002px;width:1px;height:34px;background:#3a3a3a"></div>
<div style="left:276px;top:1002px;width:1px;height:34px;background:#3a3a3a"></div>
<div style="left:300px;top:1002px;width:1px;height:34px;background:#5c5c5c"></div>
<div style="left:324px;top:1002px;width:1px;height:34px;background:#5c5c5c"></div>
<div style="left:348px;top:1002px;width:1px;height:34px;background:#5c5c5c"></div>
<div style="left:372px;top:1002px;width:1px;height:34px;background:#5c5c5c"></div>
<div style="left:396px;top:1002px;width:1px;height:34px;background:#5c5c5c"></div>
<div style="left:420px;top:1002px;width:1px;height:34px;background:#5c5c5c"></div>
<div style="left:443px;top:1002px;width:1px;height:34px;background:#5c5c5c"></div>
<div style="left:467px;top:1002px;width:1px;height:34px;background:#5c5c5c"></div>
<div style="left:491px;top:1002px;width:1px;height:34px;background:#5c5c5c"></div>
<div style="left:515px;top:1002px;width:1px;height:34px;background:#5c5c5c"></div>
<div style="left:539px;top:1002px;width:1px;height:34px;background:#5c5c5c"></div>
<div style="left:563px;top:1002px;width:1px;height:34px;background:#5c5c5c"></div>
<div style="left:587px;top:1002px;width:1px;height:34px;background:#5c5c5c"></div>
<div style="left:610px;top:1002px;width:1px;height:34px;background:#5c5c5c"></div>
<div style="left:634px;top:1002px;width:1px;height:34px;background:#5c5c5c"></div>
<div style="left:658px;top:1002px;width:1px;height:34px;background:#5c5c5c"></div>
<div style="left:682px;top:1002px;width:1px;height:34px;background:#5c5c5c"></div>
<div style="left:706px;top:1002px;width:1px;height:34px;background:#5c5c5c"></div>
<div style="left:730px;top:1002px;width:1px;height:34px;background:#5c5c5c"></div>
<div style="left:754px;top:1002px;width:1px;height:34px;background:#5c5c5c"></div>
<div style="left:777px;top:1002px;width:1px;height:34px;background:#5c5c5c"></div>
<div style="left:801px;top:1002px;width:1px;height:34px;background:#5c5c5c"></div>
<div style="left:825px;top:1002px;width:1px;height:34px;background:#5c5c5c"></div>
<div style="left:849px;top:1002px;width:1px;height:34px;background:#5c5c5c"></div>
<div style="left:873px;top:1002px;width:1px;height:34px;background:#5c5c5c"></div>
<div style="left:897px;top:1002px;width:1px;height:34px;background:#5c5c5c"></div>
<div style="left:920px;top:1002px;width:1px;height:34px;background:#5c5c5c"></div>
<div style="left:944px;top:1002px;width:1px;height:34px;background:#5c5c5c"></div>
<div style="left:968px;top:1002px;width:1px;height:34px;background:#5c5c5c"></div>
<div style="left:992px;top:1002px;width:1px;height:34px;background:#5c5c5c"></div>
<div style="left:1016px;top:1002px;width:1px;height:34px;background:#5c5c5c"></div>
<div style="left:1040px;top:1002px;width:1px;height:34px;background:#5c5c5c"></div>
<div style="left:1064px;top:1002px;width:1px;height:34px;background:#5c5c5c"></div>
<div style="left:1087px;top:1002px;width:1px;height:34px;background:#5c5c5c"></div>
<div style="left:1111px;top:1002px;width:1px;height:34px;background:#5c5c5c"></div>
<div style="left:1135px;top:1002px;width:1px;height:34px;background:#5c5c5c"></div>
<div style="left:1159px;top:1002px;width:1px;height:34px;background:#5c5c5c"></div>
<div style="left:1183px;top:1002px;width:1px;height:34px;background:#5c5c5c"></div>
<div style="left:1207px;top:1002px;width:1px;height:34px;background:#5c5c5c"></div>
<div style="left:1230px;top:1002px;width:1px;height:34px;background:#5c5c5c"></div>
<div style="left:1254px;top:1002px;width:1px;height:34px;background:#5c5c5c"></div>
<div style="left:1278px;top:1002px;width:1px;height:34px;background:#5c5c5c"></div>
<div style="left:1302px;top:1002px;width:1px;height:34px;background:#5c5c5c"></div>
<div style="left:1326px;top:1002px;width:1px;height:34px;background:#5c5c5c"></div>
<div style="left:1350px;top:1002px;width:1px;height:34px;background:#5c5c5c"></div>
<div style="left:1374px;top:1002px;width:1px;height:34px;background:#5c5c5c"></div>
<div style="left:1397px;top:1002px;width:1px;height:34px;background:#5c5c5c"></div>
<div style="left:1421px;top:1002px;width:1px;height:34px;background:#5c5c5c"></div>
<div style="left:1445px;top:1002px;width:1px;height:34px;background:#5c5c5c"></div>
<div style="left:1469px;top:1002px;width:1px;height:34px;background:#3a3a3a"></div>
<div style="left:1493px;top:1002px;width:1px;height:34px;background:#3a3a3a"></div>
<div style="left:1517px;top:1002px;width:1px;height:34px;background:#3a3a3a"></div>
<div style="left:1541px;top:1002px;width:1px;height:34px;background:#3a3a3a"></div>
<div style="left:1564px;top:1002px;width:1px;height:34px;background:#3a3a3a"></div>
<div style="left:1588px;top:1002px;width:1px;height:34px;background:#3a3a3a"></div>
<div style="left:1612px;top:1002px;width:1px;height:34px;background:#3a3a3a"></div>
<div style="left:1469px;top:1002px;width:1px;height:34px;background:#1e1e1e"></div>
<div style="left:280px;top:1002px;width:3px;height:34px;background:#63c93c"></div>
<div style="left:0px;top:1036px;width:1628px;height:19px;background:linear-gradient(#3e3e3e,#464646)"></div>
<div style="left:4px;top:1037px;width:1619px;height:14px;border:1px solid #2b2b2b;border-radius:7px;background:linear-gradient(#363636,#505050);box-shadow:0 1px 0 #5a5a5a"></div>
<div style="left:6px;top:1039px;width:9px;height:9px;background:#1e1e1e;border-radius:5px"></div>
<div style="left:1612px;top:1039px;width:9px;height:9px;background:#1e1e1e;border-radius:5px"></div>
<span class="t" style="left:19.1px;top:1037.8px;width:40px;text-align:center;color:#c6c6c6;letter-spacing:-0.3px">-50</span>
<span class="t" style="left:66.5px;top:1037.8px;width:40px;text-align:center;color:#c6c6c6;letter-spacing:-0.3px">-40</span>
<span class="t" style="left:114.0px;top:1037.8px;width:40px;text-align:center;color:#c6c6c6;letter-spacing:-0.3px">-30</span>
<span class="t" style="left:161.4px;top:1037.8px;width:40px;text-align:center;color:#c6c6c6;letter-spacing:-0.3px">-20</span>
<span class="t" style="left:208.9px;top:1037.8px;width:40px;text-align:center;color:#c6c6c6;letter-spacing:-0.3px">-10</span>
<span class="t" style="left:258.3px;top:1037.8px;width:40px;text-align:center;color:#c6c6c6;letter-spacing:-0.3px">0</span>
<span class="t" style="left:305.8px;top:1037.8px;width:40px;text-align:center;color:#c6c6c6;letter-spacing:-0.3px">10</span>
<span class="t" style="left:353.2px;top:1037.8px;width:40px;text-align:center;color:#c6c6c6;letter-spacing:-0.3px">20</span>
<span class="t" style="left:400.6px;top:1037.8px;width:40px;text-align:center;color:#c6c6c6;letter-spacing:-0.3px">30</span>
<span class="t" style="left:448.1px;top:1037.8px;width:40px;text-align:center;color:#c6c6c6;letter-spacing:-0.3px">40</span>
<span class="t" style="left:495.5px;top:1037.8px;width:40px;text-align:center;color:#c6c6c6;letter-spacing:-0.3px">50</span>
<span class="t" style="left:543.0px;top:1037.8px;width:40px;text-align:center;color:#c6c6c6;letter-spacing:-0.3px">60</span>
<span class="t" style="left:590.5px;top:1037.8px;width:40px;text-align:center;color:#c6c6c6;letter-spacing:-0.3px">70</span>
<span class="t" style="left:637.9px;top:1037.8px;width:40px;text-align:center;color:#c6c6c6;letter-spacing:-0.3px">80</span>
<span class="t" style="left:685.4px;top:1037.8px;width:40px;text-align:center;color:#c6c6c6;letter-spacing:-0.3px">90</span>
<span class="t" style="left:732.8px;top:1037.8px;width:40px;text-align:center;color:#c6c6c6;letter-spacing:-0.3px">100</span>
<span class="t" style="left:780.2px;top:1037.8px;width:40px;text-align:center;color:#c6c6c6;letter-spacing:-0.3px">110</span>
<span class="t" style="left:827.7px;top:1037.8px;width:40px;text-align:center;color:#c6c6c6;letter-spacing:-0.3px">120</span>
<span class="t" style="left:875.2px;top:1037.8px;width:40px;text-align:center;color:#c6c6c6;letter-spacing:-0.3px">130</span>
<span class="t" style="left:922.6px;top:1037.8px;width:40px;text-align:center;color:#c6c6c6;letter-spacing:-0.3px">140</span>
<span class="t" style="left:970.0px;top:1037.8px;width:40px;text-align:center;color:#c6c6c6;letter-spacing:-0.3px">150</span>
<span class="t" style="left:1017.5px;top:1037.8px;width:40px;text-align:center;color:#c6c6c6;letter-spacing:-0.3px">160</span>
<span class="t" style="left:1065.0px;top:1037.8px;width:40px;text-align:center;color:#c6c6c6;letter-spacing:-0.3px">170</span>
<span class="t" style="left:1112.4px;top:1037.8px;width:40px;text-align:center;color:#c6c6c6;letter-spacing:-0.3px">180</span>
<span class="t" style="left:1159.9px;top:1037.8px;width:40px;text-align:center;color:#c6c6c6;letter-spacing:-0.3px">190</span>
<span class="t" style="left:1207.3px;top:1037.8px;width:40px;text-align:center;color:#c6c6c6;letter-spacing:-0.3px">200</span>
<span class="t" style="left:1254.8px;top:1037.8px;width:40px;text-align:center;color:#c6c6c6;letter-spacing:-0.3px">210</span>
<span class="t" style="left:1302.2px;top:1037.8px;width:40px;text-align:center;color:#c6c6c6;letter-spacing:-0.3px">220</span>
<span class="t" style="left:1349.7px;top:1037.8px;width:40px;text-align:center;color:#c6c6c6;letter-spacing:-0.3px">230</span>
<span class="t" style="left:1397.1px;top:1037.8px;width:40px;text-align:center;color:#c6c6c6;letter-spacing:-0.3px">240</span>
<span class="t" style="left:1444.5px;top:1037.8px;width:40px;text-align:center;color:#c6c6c6;letter-spacing:-0.3px">250</span>
<span class="t" style="left:1492.0px;top:1037.8px;width:40px;text-align:center;color:#c6c6c6;letter-spacing:-0.3px">260</span>
<span class="t" style="left:1539.5px;top:1037.8px;width:40px;text-align:center;color:#c6c6c6;letter-spacing:-0.3px">270</span>
<span class="t" style="left:1586.9px;top:1037.8px;width:40px;text-align:center;color:#c6c6c6;letter-spacing:-0.3px">280</span>
<div style="left:0px;top:1055px;width:1628px;height:23px;background:#2f2f2f;border-top:1px solid #474747"></div>
<div style="left:0px;top:1078px;width:1920px;height:1px;background:#1a1a1a"></div>
<div style="left:0px;top:1079px;width:1920px;height:1px;background:#aeb6c0"></div>
<div style="left:60px;top:1079px;width:33px;height:1px;background:#fff"></div>
<div style="left:107px;top:1079px;width:40px;height:1px;background:#fff"></div>
<div class="hb" style="left:10px;top:1057px;width:29px;height:20px;"></div>
<svg style="left:29.5px;top:1061px" width="7" height="13" viewBox="0 0 7 13"><path d="M3.5 0.2L6.6 5.4H0.4Z M3.5 12.8L6.6 7.6H0.4Z" fill="#636363"/></svg>
<svg style="left:13px;top:1058.5px" width="16" height="16" viewBox="0 0 16 16"><circle cx="8" cy="8" r="6.5" fill="#f0f0f0" stroke="#0c0c0c" stroke-width="1.4"/><path d="M8 8L10.8 4.6" stroke="#777" stroke-width="1.2" stroke-linecap="round"/><path d="M8 8.4L10 11.2" stroke="#e03030" stroke-width="1.6" stroke-linecap="round"/></svg>
<svg style="left:48px;top:1063px" width="8" height="8" viewBox="0 0 8 8"><circle cx="4" cy="4" r="3.5" fill="#9a9a9a"/><rect x="1.8" y="3.4" width="4.4" height="1.2" fill="#2e2e2e"/></svg>
<span class="t" style="left:71px;top:1061.8px;">View</span>
<span class="t" style="left:110px;top:1061.8px;">Marker</span>
<span class="t" style="left:160px;top:1061.8px;">Frame</span>
<span class="t" style="left:207px;top:1061.8px;">Playback</span>
<div class="hb" style="left:266px;top:1057px;width:19px;height:20px;"></div>
<svg style="left:267.5px;top:1059px" width="16" height="16" viewBox="0 0 16 16"><circle cx="8" cy="8" r="6.2" fill="#f4f4f4" stroke="#222" stroke-width="1"/><path d="M8 8V1.8A6.2 6.2 0 0 1 14.2 8Z" fill="#f59a1e"/><path d="M8 8L10.2 11" stroke="#d03030" stroke-width="1.2"/><path d="M8 2.5V8H13.5" stroke="#8a5a10" stroke-width="0.8" fill="none"/></svg>
<div class="n" style="left:291px;top:1057px;width:116px;height:20px;border-radius:10px 0 0 10px;"></div>
<span class="t" style="left:291px;top:1061.8px;width:116px;text-align:center">Start: 1</span>
<svg style="left:298px;top:1063.5px" width="4" height="7" viewBox="0 0 4 7"><path d="M4 0L0 3.5L4 7Z" fill="#707070"/></svg>
<svg style="left:395px;top:1063.5px" width="4" height="7" viewBox="0 0 4 7"><path d="M0 0L4 3.5L0 7Z" fill="#707070"/></svg>
<div class="n" style="left:406px;top:1057px;width:111px;height:20px;border-radius:0 10px 10px 0;"></div>
<span class="t" style="left:406px;top:1061.8px;width:111px;text-align:center">End: 250</span>
<svg style="left:413px;top:1063.5px" width="4" height="7" viewBox="0 0 4 7"><path d="M4 0L0 3.5L4 7Z" fill="#707070"/></svg>
<svg style="left:505px;top:1063.5px" width="4" height="7" viewBox="0 0 4 7"><path d="M0 0L4 3.5L0 7Z" fill="#707070"/></svg>
<div class="n" style="left:524px;top:1057px;width:89px;height:20px;border-radius:10px;"></div>
<span class="t" style="left:524px;top:1061.8px;width:89px;text-align:center">1</span>
<svg style="left:531px;top:1063.5px" width="4" height="7" viewBox="0 0 4 7"><path d="M4 0L0 3.5L4 7Z" fill="#707070"/></svg>
<svg style="left:601px;top:1063.5px" width="4" height="7" viewBox="0 0 4 7"><path d="M0 0L4 3.5L0 7Z" fill="#707070"/></svg>
<div class="hb" style="left:630px;top:1058px;width:19px;height:19px;border-radius:4px 0 0 4px;"></div>
<div class="hb" style="left:648px;top:1058px;width:21px;height:19px;border-radius:0;"></div>
<div class="hb" style="left:668px;top:1058px;width:21px;height:19px;border-radius:0;"></div>
<div class="hb" style="left:688px;top:1058px;width:21px;height:19px;border-radius:0;"></div>
<div class="hb" style="left:708px;top:1058px;width:21px;height:19px;border-radius:0;"></div>
<div class="hb" style="left:728px;top:1058px;width:21px;height:19px;border-radius:0 4px 4px 0;"></div>
<svg style="left:631.5px;top:1059px" width="16" height="16" viewBox="0 0 16 16"><path d="M1.6 3.4H3.2V12.6H1.6ZM8.6 3.4V12.6L3.4 8ZM14.4 3.4V12.6L9 8Z" fill="#f4f4f4" stroke="#161616" stroke-width="0.9" stroke-linejoin="round"/></svg><svg style="left:650px;top:1059px" width="16" height="16" viewBox="0 0 16 16"><path d="M8 3.4V12.6L2 8ZM14.4 3.4V12.6L8.6 8Z" fill="#f4f4f4" stroke="#161616" stroke-width="0.9" stroke-linejoin="round"/></svg><svg style="left:670px;top:1059px" width="16" height="16" viewBox="0 0 16 16"><path d="M13.6 1.4V14.6L2.4 8Z" fill="#f4f4f4" stroke="#161616" stroke-width="0.9" stroke-linejoin="round"/></svg><svg style="left:690px;top:1059px" width="16" height="16" viewBox="0 0 16 16"><path d="M2.4 1.4V14.6L13.6 8Z" fill="#f4f4f4" stroke="#161616" stroke-width="0.9" stroke-linejoin="round"/></svg><svg style="left:710.5px;top:1059px" width="16" height="16" viewBox="0 0 16 16"><path d="M8 3.4V12.6L14 8ZM1.6 3.4V12.6L7.4 8Z" fill="#f4f4f4" stroke="#161616" stroke-width="0.9" stroke-linejoin="round"/></svg><svg style="left:730px;top:1059px" width="16" height="16" viewBox="0 0 16 16"><path d="M14.4 3.4H12.8V12.6H14.4ZM7.4 3.4V12.6L12.6 8ZM1.6 3.4V12.6L7 8Z" fill="#f4f4f4" stroke="#161616" stroke-width="0.9" stroke-linejoin="round"/></svg>
<div class="b" style="left:755px;top:1057px;width:114px;height:20px;"></div>
<span class="t" style="left:762px;top:1061.8px;">No Sync</span>
<svg style="left:859px;top:1061.0px" width="7" height="13" viewBox="0 0 7 13"><path d="M3.5 0.2L6.6 5.4H0.4Z M3.5 12.8L6.6 7.6H0.4Z" fill="#636363"/></svg>
<div class="hb" style="left:885px;top:1057px;width:20px;height:20px;"></div>
<div style="left:890px;top:1062px;width:10px;height:10px;background:radial-gradient(circle at 40% 35%,#ff6a3a,#d82c08);border-radius:5px;border:1px solid #f0a888"></div>
<div class="hb" style="left:911px;top:1057px;width:125px;height:20px;background:#7f888f;border-radius:4px 0 0 4px;"></div>
<div class="hb" style="left:1035px;top:1057px;width:21px;height:20px;border-radius:0;"></div>
<div class="hb" style="left:1055px;top:1057px;width:20px;height:20px;border-radius:0 4px 4px 0;"></div>
<svg style="left:913px;top:1058.5px" width="18" height="16" viewBox="0 0 18 16"><circle cx="10.2" cy="12" r="2.2" fill="none" stroke="#e4e4e4" stroke-width="1.5"/><path d="M11.6 10.4L16.4 5.6M15 7L16.6 8.6" stroke="#e4e4e4" stroke-width="1.5"/><circle cx="5" cy="12.4" r="2.4" fill="none" stroke="#5a5420" stroke-width="2.6"/><path d="M5 10V1.6H8M5 4.6H7.4" stroke="#5a5420" stroke-width="2.6" fill="none"/><circle cx="5" cy="12.4" r="2.4" fill="none" stroke="#e8dc8a" stroke-width="1.5"/><path d="M5 10V1.6H8M5 4.6H7.4" stroke="#e8dc8a" stroke-width="1.5" fill="none"/></svg>
<svg style="left:1037px;top:1059px" width="16" height="16" viewBox="0 0 16 16"><circle cx="4.4" cy="11.6" r="2.6" fill="none" stroke="#f0f0f0" stroke-width="1.7"/><path d="M6.4 9.6L13.6 2.4M11.4 4.6L13.4 6.6M13 3L14.8 4.8" stroke="#f0f0f0" stroke-width="1.6"/></svg>
<svg style="left:1057px;top:1059px" width="16" height="16" viewBox="0 0 16 16"><circle cx="4.4" cy="11.6" r="2.6" fill="none" stroke="#cfcfcf" stroke-width="1.7"/><path d="M6.4 9.6L13.6 2.4M11.4 4.6L13.4 6.6M13 3L14.8 4.8" stroke="#cfcfcf" stroke-width="1.6"/><path d="M2 1.6L14 14.4" stroke="#e03a3a" stroke-width="1.6"/></svg>
<div style="left:1629px;top:53px;width:291px;height:26px;background:#3a3a3a;border-top:1px solid #4a4a4a;border-left:1px solid #4a4a4a"></div>
<div style="left:1629px;top:79px;width:291px;height:1px;background:#4f4f4f"></div>
<div class="hb" style="left:1639px;top:56px;width:29px;height:20px;"></div>
<svg style="left:1658.5px;top:60px" width="7" height="13" viewBox="0 0 7 13"><path d="M3.5 0.2L6.6 5.4H0.4Z M3.5 12.8L6.6 7.6H0.4Z" fill="#636363"/></svg>
<svg style="left:1642px;top:58px" width="16" height="16" viewBox="0 0 16 16"><rect x="1.5" y="1.5" width="6" height="2.4" fill="#f59a3a" stroke="#5a3a10" stroke-width="0.6"/><path d="M3.5 4V12.5H7.5M3.5 7.5H7.5" fill="none" stroke="#8ea6c8" stroke-width="1.1"/><rect x="8" y="6.3" width="6.2" height="2.4" fill="#fff" stroke="#222" stroke-width="0.6"/><rect x="8" y="11.3" width="6.2" height="2.4" fill="#fff" stroke="#222" stroke-width="0.6"/></svg>
<svg style="left:1677.5px;top:62px" width="8" height="8" viewBox="0 0 8 8"><circle cx="4" cy="4" r="3.5" fill="#9a9a9a"/><rect x="1.8" y="3.4" width="4.4" height="1.2" fill="#2e2e2e"/></svg>
<span class="t" style="left:1700px;top:60.8px;">View</span>
<span class="t" style="left:1739px;top:60.8px;">Search</span>
<div class="b" style="left:1787px;top:56px;width:118px;height:20px;"></div>
<span class="t" style="left:1794px;top:60.8px;">All Scenes</span>
<svg style="left:1895px;top:60.0px" width="7" height="13" viewBox="0 0 7 13"><path d="M3.5 0.2L6.6 5.4H0.4Z M3.5 12.8L6.6 7.6H0.4Z" fill="#636363"/></svg>
<div class="hb" style="left:1911px;top:56px;width:20px;height:20px;background:#868e94;"></div>
<svg style="left:1913px;top:58px" width="16" height="16" viewBox="0 0 16 16"><circle cx="9" cy="7" r="4" fill="#ddd" stroke="#777" stroke-width="1.2"/><path d="M2 14L6 10" stroke="#e8843a" stroke-width="2.2"/></svg>
<div style="left:1629px;top:80px;width:291px;height:148px;background:#4a4a4a"></div>
<div style="left:1629px;top:100px;width:291px;height:20px;background:#515151"></div>
<div style="left:1629px;top:140px;width:291px;height:20px;background:#515151"></div>
<div style="left:1629px;top:180px;width:291px;height:20px;background:#515151"></div>
<div style="left:1630px;top:81px;width:232px;height:18px;background:#858a8e"></div>
<div style="left:1862px;top:80px;width:1px;height:128px;background:#404040"></div>
<div style="left:1882px;top:80px;width:1px;height:128px;background:#404040"></div>
<div style="left:1902px;top:80px;width:1px;height:128px;background:#404040"></div>
<div style="left:1656px;top:99px;width:1px;height:91px;background:#6a6a6a"></div>
<div style="left:1661px;top:149px;width:10px;height:1px;background:#6a6a6a"></div>
<div style="left:1661px;top:169px;width:10px;height:1px;background:#6a6a6a"></div>
<div style="left:1661px;top:189px;width:10px;height:1px;background:#6a6a6a"></div>
<div style="left:1642px;top:89px;width:10px;height:1px;background:#8c7c7c"></div>
<span class="t" style="left:1670.5px;top:84.8px;color:#d4d4d4;letter-spacing:-0.62px">Scene</span>
<span class="t" style="left:1690.5px;top:104.8px;color:#d8d8d8;letter-spacing:-0.62px">RenderLayers</span>
<span class="t" style="left:1690.5px;top:124.8px;color:#e4e4e4;letter-spacing:-0.62px">World</span>
<span class="t" style="left:1690.5px;top:144.8px;color:#fff;letter-spacing:-0.62px">Camera</span>
<span class="t" style="left:1690.5px;top:164.8px;color:#e4e4e4;letter-spacing:-0.62px">Plane</span>
<span class="t" style="left:1690.5px;top:184.8px;color:#e4e4e4;letter-spacing:-0.62px">Plane.001</span>
<svg style="left:1650px;top:81px" width="18" height="18" viewBox="0 0 18 18"><circle cx="9" cy="9" r="8.6" fill="rgba(255,255,255,.3)"/></svg>
<svg style="left:1631.5px;top:83.5px" width="12" height="12" viewBox="0 0 12 12"><circle cx="6" cy="6" r="4.3" fill="#ececec" stroke="#161616" stroke-width="1.2"/><path d="M3.6 6H8.4" stroke="#111" stroke-width="1.4"/></svg>
<svg style="left:1651.5px;top:82px" width="16" height="16" viewBox="0 0 16 16"><defs><radialGradient id="g9" cx="0.35" cy="0.3" r="0.8"><stop offset="0" stop-color="#fff"/><stop offset="0.6" stop-color="#bbb"/><stop offset="1" stop-color="#444"/></radialGradient><linearGradient id="g10" x1="0" y1="0" x2="1" y2="0"><stop offset="0" stop-color="#9cc0f0"/><stop offset="0.5" stop-color="#4a80d0"/><stop offset="1" stop-color="#1f4a9a"/></linearGradient></defs><rect x="8.3" y="3" width="5.6" height="9.4" rx="2.4" fill="url(#g10)" stroke="#1a2a4a" stroke-width="0.7"/><circle cx="6" cy="11.2" r="3.6" fill="url(#g9)" stroke="#222" stroke-width="0.7"/><circle cx="3.4" cy="3.6" r="1.8" fill="#f6f08a" stroke="#8a8420" stroke-width="0.6"/></svg>
<svg style="left:1656.5px;top:103.5px" width="12" height="12" viewBox="0 0 12 12"><circle cx="6" cy="6" r="4.3" fill="#ececec" stroke="#161616" stroke-width="1.2"/><path d="M3.6 6H8.4" stroke="#111" stroke-width="1.4"/><path d="M6 3.6V8.4" stroke="#111" stroke-width="1.4"/></svg>
<svg style="left:1671px;top:102px" width="16" height="16" viewBox="0 0 16 16"><rect x="5.2" y="5.2" width="9" height="8.6" fill="#d8c89a" stroke="#3a3420" stroke-width="0.8" transform="rotate(12 9.7 9.5)"/><rect x="1.6" y="1.6" width="9.6" height="9.2" fill="#f4f4f8" stroke="#111" stroke-width="0.9"/><rect x="6.2" y="3" width="2.8" height="5" rx="1" fill="#3a6ac8"/><circle cx="5.2" cy="8.2" r="1.6" fill="#ddd" stroke="#555" stroke-width="0.5"/><circle cx="3.4" cy="3.4" r="0.9" fill="#f0e060"/></svg>
<svg style="left:1778.5px;top:102px" width="16" height="16" viewBox="0 0 16 16"><rect x="5.2" y="5.2" width="9" height="8.6" fill="#d8c89a" stroke="#3a3420" stroke-width="0.8" transform="rotate(12 9.7 9.5)"/><rect x="1.6" y="1.6" width="9.6" height="9.2" fill="#f4f4f8" stroke="#111" stroke-width="0.9"/><rect x="6.2" y="3" width="2.8" height="5" rx="1" fill="#3a6ac8"/><circle cx="5.2" cy="8.2" r="1.6" fill="#ddd" stroke="#555" stroke-width="0.5"/><circle cx="3.4" cy="3.4" r="0.9" fill="#f0e060"/></svg>
<svg style="left:1777px;top:101px" width="18" height="18" viewBox="0 0 18 18"><circle cx="9" cy="9" r="8.6" fill="rgba(255,255,255,.14)"/></svg>
<svg style="left:1670px;top:121px" width="18" height="18" viewBox="0 0 18 18"><circle cx="9" cy="9" r="8.4" fill="rgba(150,150,220,.28)"/></svg>
<svg style="left:1671px;top:122px" width="16" height="16" viewBox="0 0 16 16"><defs><radialGradient id="g11" cx="0.4" cy="0.35" r="0.75"><stop offset="0" stop-color="#9cc4f0"/><stop offset="0.7" stop-color="#3a74c0"/><stop offset="1" stop-color="#1a3a78"/></radialGradient></defs><circle cx="8" cy="8" r="6.4" fill="url(#g11)" stroke="#2a3048" stroke-width="1"/><path d="M4 4.5C5.5 3 7.5 3.2 8 4.2C7.5 5.5 6.5 5.5 6.2 6.8C5.5 7.8 4.2 7.5 3 8.2C2.5 6.5 3 5.5 4 4.5Z" fill="#4a9a3a"/><path d="M9.5 6.5C10.8 6 12.2 6.8 12.6 8C12.4 9.8 11.2 10.2 10.6 11.8C9.6 11.2 9.8 9.8 9 9C8.6 8 8.8 7 9.5 6.5Z" fill="#3f8f30"/><path d="M5 10.5C6 10.3 6.8 11 6.6 12.2C6 12.5 5.2 11.8 5 10.5Z" fill="#4a9a3a"/></svg>
<svg style="left:1670px;top:141px" width="18" height="18" viewBox="0 0 18 18"><circle cx="9" cy="9" r="8.6" fill="rgba(240,140,50,.4)"/></svg>
<svg style="left:1748.500px;top:141px" width="18" height="18" viewBox="0 0 18 18"><circle cx="9" cy="9" r="8.6" fill="rgba(255,255,255,.2)"/></svg>
<svg style="left:1651.5px;top:143.5px" width="12" height="12" viewBox="0 0 12 12"><circle cx="6" cy="6" r="4.3" fill="#ececec" stroke="#161616" stroke-width="1.2"/><path d="M3.6 6H8.4" stroke="#111" stroke-width="1.4"/><path d="M6 3.6V8.4" stroke="#111" stroke-width="1.4"/></svg>
<svg style="left:1671px;top:142px" width="16" height="16" viewBox="0 0 16 16"><circle cx="4.6" cy="4.6" r="3" fill="#e8902c" stroke="#7a4208" stroke-width="0.9"/><circle cx="4.6" cy="4.6" r="1" fill="#fbd8a8"/><circle cx="10.6" cy="4.6" r="3" fill="#e8902c" stroke="#7a4208" stroke-width="0.9"/><circle cx="10.6" cy="4.6" r="1" fill="#fbd8a8"/><rect x="3.6" y="8.2" width="7.6" height="5.2" rx="0.8" fill="#e8902c" stroke="#7a4208" stroke-width="0.9"/><path d="M11.4 10.8L14.6 9V13Z" fill="#e8902c" stroke="#7a4208" stroke-width="0.8" stroke-linejoin="round"/><rect x="5" y="10.2" width="3.6" height="1.3" fill="#fbd8a8"/><path d="M1 10.8H3.4" stroke="#7a4208" stroke-width="1.4"/></svg>
<svg style="left:1749.5px;top:142px" width="16" height="16" viewBox="0 0 16 16"><circle cx="4.6" cy="4.6" r="3" fill="#8e8e8e" stroke="#3c3c3c" stroke-width="0.9"/><circle cx="4.6" cy="4.6" r="1" fill="#c4c4c4"/><circle cx="10.6" cy="4.6" r="3" fill="#8e8e8e" stroke="#3c3c3c" stroke-width="0.9"/><circle cx="10.6" cy="4.6" r="1" fill="#c4c4c4"/><rect x="3.6" y="8.2" width="7.6" height="5.2" rx="0.8" fill="#8e8e8e" stroke="#3c3c3c" stroke-width="0.9"/><path d="M11.4 10.8L14.6 9V13Z" fill="#8e8e8e" stroke="#3c3c3c" stroke-width="0.8" stroke-linejoin="round"/><rect x="5" y="10.2" width="3.6" height="1.3" fill="#c4c4c4"/><path d="M1 10.8H3.4" stroke="#3c3c3c" stroke-width="1.4"/></svg>
<svg style="left:1651.5px;top:163.5px" width="12" height="12" viewBox="0 0 12 12"><circle cx="6" cy="6" r="4.3" fill="#ececec" stroke="#161616" stroke-width="1.2"/><path d="M3.6 6H8.4" stroke="#111" stroke-width="1.4"/><path d="M6 3.6V8.4" stroke="#111" stroke-width="1.4"/></svg>
<svg style="left:1671px;top:162px" width="16" height="16" viewBox="0 0 16 16"><path d="M2.6 3.2H13.4L8 13.4Z" fill="none" stroke="#6a3a08" stroke-width="2.6" stroke-linejoin="round"/><path d="M2.6 3.2H13.4L8 13.4Z" fill="none" stroke="#f08c28" stroke-width="1.6" stroke-linejoin="round"/><circle cx="2.6" cy="3.2" r="1" fill="#fff"/><circle cx="13.4" cy="3.2" r="1" fill="#fff"/><circle cx="8" cy="13.4" r="1" fill="#fff"/></svg>
<svg style="left:1738px;top:162px" width="16" height="16" viewBox="0 0 16 16"><path d="M2.6 3.2H13.4L8 13.4Z" fill="none" stroke="#2e2e2e" stroke-width="1.1"/><circle cx="2.6" cy="3.2" r="1.5" fill="#c8c8c8" stroke="#2a2a2a" stroke-width="0.7"/><circle cx="13.4" cy="3.2" r="1.5" fill="#c8c8c8" stroke="#2a2a2a" stroke-width="0.7"/><circle cx="8" cy="13.4" r="1.5" fill="#c8c8c8" stroke="#2a2a2a" stroke-width="0.7"/></svg>
<svg style="left:1651.5px;top:183.5px" width="12" height="12" viewBox="0 0 12 12"><circle cx="6" cy="6" r="4.3" fill="#ececec" stroke="#161616" stroke-width="1.2"/><path d="M3.6 6H8.4" stroke="#111" stroke-width="1.4"/><path d="M6 3.6V8.4" stroke="#111" stroke-width="1.4"/></svg>
<svg style="left:1671px;top:182px" width="16" height="16" viewBox="0 0 16 16"><path d="M2.6 3.2H13.4L8 13.4Z" fill="none" stroke="#6a3a08" stroke-width="2.6" stroke-linejoin="round"/><path d="M2.6 3.2H13.4L8 13.4Z" fill="none" stroke="#f08c28" stroke-width="1.6" stroke-linejoin="round"/><circle cx="2.6" cy="3.2" r="1" fill="#fff"/><circle cx="13.4" cy="3.2" r="1" fill="#fff"/><circle cx="8" cy="13.4" r="1" fill="#fff"/></svg>
<svg style="left:1762px;top:182px" width="16" height="16" viewBox="0 0 16 16"><path d="M2.6 3.2H13.4L8 13.4Z" fill="none" stroke="#2e2e2e" stroke-width="1.1"/><circle cx="2.6" cy="3.2" r="1.5" fill="#c8c8c8" stroke="#2a2a2a" stroke-width="0.7"/><circle cx="13.4" cy="3.2" r="1.5" fill="#c8c8c8" stroke="#2a2a2a" stroke-width="0.7"/><circle cx="8" cy="13.4" r="1.5" fill="#c8c8c8" stroke="#2a2a2a" stroke-width="0.7"/></svg>
<svg style="left:1864px;top:142px" width="16" height="16" viewBox="0 0 16 16"><path d="M1 8.2C3.6 3.4 12.4 3.4 15 8.2C12.4 12.6 3.6 12.6 1 8.2Z" fill="#f2f2f2" stroke="#262626" stroke-width="0.9"/><circle cx="8" cy="7.6" r="2.9" fill="#9a9a9a"/><circle cx="8" cy="7.4" r="1.5" fill="#2a2a2a"/><path d="M4 10.6C6.4 11.8 9.6 11.8 12 10.6" stroke="#bbb" stroke-width="0.8" fill="none"/></svg>
<svg style="left:1884px;top:142px" width="16" height="16" viewBox="0 0 16 16"><path d="M5 1.4L5 12.6L7.8 10L9.8 14.6L11.6 13.8L9.6 9.4L13.2 9.2Z" fill="#fff" stroke="#111" stroke-width="1" stroke-linejoin="round"/></svg>
<svg style="left:1903.5px;top:142px" width="16" height="16" viewBox="0 0 16 16"><defs><radialGradient id="g12" cx="0.35" cy="0.35" r="0.75"><stop offset="0" stop-color="#8a9ad0"/><stop offset="0.45" stop-color="#3a4a80"/><stop offset="0.7" stop-color="#7a2018"/><stop offset="1" stop-color="#d03828"/></radialGradient><linearGradient id="g13" x1="0" y1="0" x2="0" y2="1"><stop offset="0" stop-color="#f4f4f4"/><stop offset="1" stop-color="#a8a8a8"/></linearGradient></defs><path d="M1.3 5H3.4L4.2 3.6H8L8.8 5H14.7V13.7H1.3Z" fill="url(#g13)" stroke="#141414" stroke-width="1.1" stroke-linejoin="round"/><rect x="2.6" y="7.2" width="1.5" height="5.6" fill="#1e1e1e"/><rect x="12.6" y="7.2" width="1.2" height="5.6" fill="#2a2a2a"/><rect x="10.6" y="5.4" width="2.6" height="1" fill="#3a4a7a"/><circle cx="8.6" cy="10" r="2.9" fill="url(#g12)" stroke="#2a2a2a" stroke-width="0.7"/><circle cx="3.8" cy="6.2" r="0.8" fill="#f01818"/></svg>
<svg style="left:1864px;top:162px" width="16" height="16" viewBox="0 0 16 16"><path d="M1 8.2C3.6 3.4 12.4 3.4 15 8.2C12.4 12.6 3.6 12.6 1 8.2Z" fill="#f2f2f2" stroke="#262626" stroke-width="0.9"/><circle cx="8" cy="7.6" r="2.9" fill="#9a9a9a"/><circle cx="8" cy="7.4" r="1.5" fill="#2a2a2a"/><path d="M4 10.6C6.4 11.8 9.6 11.8 12 10.6" stroke="#bbb" stroke-width="0.8" fill="none"/></svg>
<svg style="left:1884px;top:162px" width="16" height="16" viewBox="0 0 16 16"><path d="M5 1.4L5 12.6L7.8 10L9.8 14.6L11.6 13.8L9.6 9.4L13.2 9.2Z" fill="#fff" stroke="#111" stroke-width="1" stroke-linejoin="round"/></svg>
<svg style="left:1903.5px;top:162px" width="16" height="16" viewBox="0 0 16 16"><defs><radialGradient id="g14" cx="0.35" cy="0.35" r="0.75"><stop offset="0" stop-color="#8a9ad0"/><stop offset="0.45" stop-color="#3a4a80"/><stop offset="0.7" stop-color="#7a2018"/><stop offset="1" stop-color="#d03828"/></radialGradient><linearGradient id="g15" x1="0" y1="0" x2="0" y2="1"><stop offset="0" stop-color="#f4f4f4"/><stop offset="1" stop-color="#a8a8a8"/></linearGradient></defs><path d="M1.3 5H3.4L4.2 3.6H8L8.8 5H14.7V13.7H1.3Z" fill="url(#g15)" stroke="#141414" stroke-width="1.1" stroke-linejoin="round"/><rect x="2.6" y="7.2" width="1.5" height="5.6" fill="#1e1e1e"/><rect x="12.6" y="7.2" width="1.2" height="5.6" fill="#2a2a2a"/><rect x="10.6" y="5.4" width="2.6" height="1" fill="#3a4a7a"/><circle cx="8.6" cy="10" r="2.9" fill="url(#g14)" stroke="#2a2a2a" stroke-width="0.7"/><circle cx="3.8" cy="6.2" r="0.8" fill="#f01818"/></svg>
<svg style="left:1864px;top:182px" width="16" height="16" viewBox="0 0 16 16"><path d="M1 8.2C3.6 3.4 12.4 3.4 15 8.2C12.4 12.6 3.6 12.6 1 8.2Z" fill="#f2f2f2" stroke="#262626" stroke-width="0.9"/><circle cx="8" cy="7.6" r="2.9" fill="#9a9a9a"/><circle cx="8" cy="7.4" r="1.5" fill="#2a2a2a"/><path d="M4 10.6C6.4 11.8 9.6 11.8 12 10.6" stroke="#bbb" stroke-width="0.8" fill="none"/></svg>
<svg style="left:1884px;top:182px" width="16" height="16" viewBox="0 0 16 16"><path d="M5 1.4L5 12.6L7.8 10L9.8 14.6L11.6 13.8L9.6 9.4L13.2 9.2Z" fill="#fff" stroke="#111" stroke-width="1" stroke-linejoin="round"/></svg>
<svg style="left:1903.5px;top:182px" width="16" height="16" viewBox="0 0 16 16"><defs><radialGradient id="g16" cx="0.35" cy="0.35" r="0.75"><stop offset="0" stop-color="#8a9ad0"/><stop offset="0.45" stop-color="#3a4a80"/><stop offset="0.7" stop-color="#7a2018"/><stop offset="1" stop-color="#d03828"/></radialGradient><linearGradient id="g17" x1="0" y1="0" x2="0" y2="1"><stop offset="0" stop-color="#f4f4f4"/><stop offset="1" stop-color="#a8a8a8"/></linearGradient></defs><path d="M1.3 5H3.4L4.2 3.6H8L8.8 5H14.7V13.7H1.3Z" fill="url(#g17)" stroke="#141414" stroke-width="1.1" stroke-linejoin="round"/><rect x="2.6" y="7.2" width="1.5" height="5.6" fill="#1e1e1e"/><rect x="12.6" y="7.2" width="1.2" height="5.6" fill="#2a2a2a"/><rect x="10.6" y="5.4" width="2.6" height="1" fill="#3a4a7a"/><circle cx="8.6" cy="10" r="2.9" fill="url(#g16)" stroke="#2a2a2a" stroke-width="0.7"/><circle cx="3.8" cy="6.2" r="0.8" fill="#f01818"/></svg>
<div style="left:1768px;top:103px;width:1px;height:13px;background:#1a1a1a;width:1.5px"></div>
<div style="left:1740px;top:143px;width:1px;height:13px;background:#1a1a1a;width:1.5px"></div>
<div style="left:1728px;top:163px;width:1px;height:13px;background:#1a1a1a;width:1.5px"></div>
<div style="left:1752px;top:183px;width:1px;height:13px;background:#1a1a1a;width:1.5px"></div>
<div style="left:1632px;top:211px;width:284px;height:13px;border:1px solid #333;border-radius:7px;background:#3e3e3e"></div>
<div style="left:1632px;top:211px;width:276px;height:13px;border:1px solid #333;border-radius:7px;background:linear-gradient(#4a4a4a,#414141)"></div>
<div style="left:1629px;top:228px;width:291px;height:2px;background:#171717"></div>
<div style="left:1629px;top:230px;width:291px;height:848px;background:#3a3a3a"></div>
<div style="left:1629px;top:230px;width:1px;height:848px;background:#484848"></div>
<div style="left:1629px;top:230px;width:291px;height:1px;background:#4a4a4a"></div>
<div style="left:1630px;top:254px;width:290px;height:1px;background:#454545"></div>
<div class="hb" style="left:1639px;top:232px;width:29px;height:20px;"></div>
<svg style="left:1658.5px;top:236px" width="7" height="13" viewBox="0 0 7 13"><path d="M3.5 0.2L6.6 5.4H0.4Z M3.5 12.8L6.6 7.6H0.4Z" fill="#636363"/></svg>
<svg style="left:1642px;top:234px" width="16" height="16" viewBox="0 0 16 16"><rect x="1.4" y="1.6" width="13.2" height="5.2" rx="2.4" fill="#6e6e6e" stroke="#0c0c0c" stroke-width="1.2"/><rect x="9" y="2.3" width="5" height="3.8" rx="1.6" fill="#fff"/><rect x="1.4" y="9" width="13.2" height="5.6" rx="2.4" fill="#fff" stroke="#0c0c0c" stroke-width="1.2"/><path d="M2.8 11.8L5 10.1V13.5ZM13.2 11.8L11 10.1V13.5Z" fill="#111"/><rect x="5.4" y="10.6" width="5.2" height="2.4" fill="#ccc"/></svg>
<div class="hb" style="left:1677px;top:232px;width:19px;height:20px;background:#f57a06;border-color:#3a2a1a;border-radius:4px 0 0 4px;"></div>
<div class="hb" style="left:1695px;top:232px;width:21px;height:20px;border-radius:0;"></div>
<div class="hb" style="left:1715px;top:232px;width:21px;height:20px;border-radius:0;"></div>
<div class="hb" style="left:1735px;top:232px;width:21px;height:20px;border-radius:0;"></div>
<div class="hb" style="left:1755px;top:232px;width:21px;height:20px;border-radius:0;"></div>
<div class="hb" style="left:1775px;top:232px;width:21px;height:20px;border-radius:0;"></div>
<div class="hb" style="left:1795px;top:232px;width:21px;height:20px;border-radius:0;"></div>
<div class="hb" style="left:1815px;top:232px;width:21px;height:20px;border-radius:0;"></div>
<div class="hb" style="left:1835px;top:232px;width:20px;height:20px;border-radius:0 4px 4px 0;"></div>
<svg style="left:1678px;top:234px" width="16" height="16" viewBox="0 0 16 16"><defs><radialGradient id="g18" cx="0.35" cy="0.35" r="0.75"><stop offset="0" stop-color="#8a9ad0"/><stop offset="0.45" stop-color="#3a4a80"/><stop offset="0.7" stop-color="#7a2018"/><stop offset="1" stop-color="#d03828"/></radialGradient><linearGradient id="g19" x1="0" y1="0" x2="0" y2="1"><stop offset="0" stop-color="#f4f4f4"/><stop offset="1" stop-color="#a8a8a8"/></linearGradient></defs><path d="M1.3 5H3.4L4.2 3.6H8L8.8 5H14.7V13.7H1.3Z" fill="url(#g19)" stroke="#141414" stroke-width="1.1" stroke-linejoin="round"/><rect x="2.6" y="7.2" width="1.5" height="5.6" fill="#1e1e1e"/><rect x="12.6" y="7.2" width="1.2" height="5.6" fill="#2a2a2a"/><rect x="10.6" y="5.4" width="2.6" height="1" fill="#3a4a7a"/><circle cx="8.6" cy="10" r="2.9" fill="url(#g18)" stroke="#2a2a2a" stroke-width="0.7"/><circle cx="3.8" cy="6.2" r="0.8" fill="#f01818"/></svg>
<svg style="opacity:.82;left:1697.5px;top:234px" width="16" height="16" viewBox="0 0 16 16"><rect x="5.2" y="5.2" width="9" height="8.6" fill="#d8c89a" stroke="#3a3420" stroke-width="0.8" transform="rotate(12 9.7 9.5)"/><rect x="1.6" y="1.6" width="9.6" height="9.2" fill="#f4f4f8" stroke="#111" stroke-width="0.9"/><rect x="6.2" y="3" width="2.8" height="5" rx="1" fill="#3a6ac8"/><circle cx="5.2" cy="8.2" r="1.6" fill="#ddd" stroke="#555" stroke-width="0.5"/><circle cx="3.4" cy="3.4" r="0.9" fill="#f0e060"/></svg>
<svg style="opacity:.82;left:1717.5px;top:234px" width="16" height="16" viewBox="0 0 16 16"><defs><radialGradient id="g20" cx="0.35" cy="0.3" r="0.8"><stop offset="0" stop-color="#fff"/><stop offset="0.6" stop-color="#bbb"/><stop offset="1" stop-color="#444"/></radialGradient><linearGradient id="g21" x1="0" y1="0" x2="1" y2="0"><stop offset="0" stop-color="#9cc0f0"/><stop offset="0.5" stop-color="#4a80d0"/><stop offset="1" stop-color="#1f4a9a"/></linearGradient></defs><rect x="8.3" y="3" width="5.6" height="9.4" rx="2.4" fill="url(#g21)" stroke="#1a2a4a" stroke-width="0.7"/><circle cx="6" cy="11.2" r="3.6" fill="url(#g20)" stroke="#222" stroke-width="0.7"/><circle cx="3.4" cy="3.6" r="1.8" fill="#f6f08a" stroke="#8a8420" stroke-width="0.6"/></svg>
<svg style="opacity:.82;left:1737.5px;top:234px" width="16" height="16" viewBox="0 0 16 16"><defs><radialGradient id="g22" cx="0.4" cy="0.35" r="0.75"><stop offset="0" stop-color="#9cc4f0"/><stop offset="0.7" stop-color="#3a74c0"/><stop offset="1" stop-color="#1a3a78"/></radialGradient></defs><circle cx="8" cy="8" r="6.4" fill="url(#g22)" stroke="#2a3048" stroke-width="1"/><path d="M4 4.5C5.5 3 7.5 3.2 8 4.2C7.5 5.5 6.5 5.5 6.2 6.8C5.5 7.8 4.2 7.5 3 8.2C2.5 6.5 3 5.5 4 4.5Z" fill="#4a9a3a"/><path d="M9.5 6.5C10.8 6 12.2 6.8 12.6 8C12.4 9.8 11.2 10.2 10.6 11.8C9.6 11.2 9.8 9.8 9 9C8.6 8 8.8 7 9.5 6.5Z" fill="#3f8f30"/><path d="M5 10.5C6 10.3 6.8 11 6.6 12.2C6 12.5 5.2 11.8 5 10.5Z" fill="#4a9a3a"/></svg>
<svg style="opacity:.82;left:1757.5px;top:234px" width="16" height="16" viewBox="0 0 16 16"><path d="M1.5 3.6L8 1.2L14.5 3.6V11.6L8 15L1.5 11.6Z" fill="#f0a04c" stroke="#3a1e00" stroke-width="1.3" stroke-linejoin="round"/><path d="M8 6.2L14.3 3.8V11.4L8 14.7Z" fill="#d4802a"/><path d="M1.9 3.7L8 1.5L14.1 3.7L8 6.2Z" fill="#f7d9b0"/><path d="M2.2 4L8 6.3L13.8 4M8 6.3V14.3" fill="none" stroke="#fbe6c8" stroke-width="0.9"/></svg>
<svg style="opacity:.82;left:1777.5px;top:234px" width="16" height="16" viewBox="0 0 16 16"><ellipse cx="5.6" cy="10.2" rx="4" ry="2.5" transform="rotate(-38 5.6 10.2)" fill="none" stroke="#b8b8b8" stroke-width="1.7"/><ellipse cx="10.4" cy="5.8" rx="4" ry="2.5" transform="rotate(-38 10.4 5.8)" fill="none" stroke="#9a9a9a" stroke-width="1.7"/><ellipse cx="5.6" cy="10.2" rx="4" ry="2.5" transform="rotate(-38 5.6 10.2)" fill="none" stroke="#333" stroke-width="0.4"/></svg>
<svg style="opacity:.82;left:1797.5px;top:234px" width="16" height="16" viewBox="0 0 16 16"><circle cx="4.6" cy="4.6" r="3" fill="#8e8e8e" stroke="#3c3c3c" stroke-width="0.9"/><circle cx="4.6" cy="4.6" r="1" fill="#c4c4c4"/><circle cx="10.6" cy="4.6" r="3" fill="#8e8e8e" stroke="#3c3c3c" stroke-width="0.9"/><circle cx="10.6" cy="4.6" r="1" fill="#c4c4c4"/><rect x="3.6" y="8.2" width="7.6" height="5.2" rx="0.8" fill="#8e8e8e" stroke="#3c3c3c" stroke-width="0.9"/><path d="M11.4 10.8L14.6 9V13Z" fill="#8e8e8e" stroke="#3c3c3c" stroke-width="0.8" stroke-linejoin="round"/><rect x="5" y="10.2" width="3.6" height="1.3" fill="#c4c4c4"/><path d="M1 10.8H3.4" stroke="#3c3c3c" stroke-width="1.4"/></svg>
<svg style="opacity:.82;left:1817.5px;top:234px" width="16" height="16" viewBox="0 0 16 16"><rect x="2" y="2" width="12" height="12" fill="#f4eeee" stroke="#3a2020" stroke-width="0.8"/><rect x="2.4" y="2.4" width="2.8" height="2.8" fill="#b82a24"/><rect x="2.4" y="8" width="2.8" height="2.8" fill="#b82a24"/><rect x="5.2" y="5.2" width="2.8" height="2.8" fill="#b82a24"/><rect x="5.2" y="10.8" width="2.8" height="2.8" fill="#b82a24"/><rect x="8" y="2.4" width="2.8" height="2.8" fill="#b82a24"/><rect x="8" y="8" width="2.8" height="2.8" fill="#b82a24"/><rect x="10.8" y="5.2" width="2.8" height="2.8" fill="#b82a24"/><rect x="10.8" y="10.8" width="2.8" height="2.8" fill="#b82a24"/></svg>
<svg style="opacity:.82;left:1837.5px;top:234px" width="16" height="16" viewBox="0 0 16 16"><defs><radialGradient id="g23" cx="0.35" cy="0.3" r="0.8"><stop offset="0" stop-color="#fff"/><stop offset="1" stop-color="#666"/></radialGradient></defs><path d="M1.6 7.2L5.8 13.6L11 5" fill="none" stroke="#4a6fb0" stroke-width="2.4" stroke-linejoin="miter"/><circle cx="11.8" cy="3.8" r="2.6" fill="url(#g23)" stroke="#444" stroke-width="0.5"/></svg>
<svg style="left:1638.5px;top:264.5px" width="16" height="16" viewBox="0 0 16 16"><path d="M1.8 14.2L6.4 9.6" stroke="#d8d8d8" stroke-width="1.3" stroke-linecap="round"/><path d="M8.2 2.2L13.8 7.8L12.4 8.6L10.8 8.2L8.4 11.4L4.6 7.6L7.8 5.2L7.4 3.6Z" fill="#e8e8e8" stroke="#222" stroke-width="0.8" stroke-linejoin="round"/><path d="M8.4 5.8L10.4 7.8" stroke="#999" stroke-width="1"/></svg>
<svg style="left:1661px;top:264px" width="16" height="16" viewBox="0 0 16 16"><defs><radialGradient id="g24" cx="0.35" cy="0.3" r="0.8"><stop offset="0" stop-color="#fff"/><stop offset="0.6" stop-color="#bbb"/><stop offset="1" stop-color="#444"/></radialGradient><linearGradient id="g25" x1="0" y1="0" x2="1" y2="0"><stop offset="0" stop-color="#9cc0f0"/><stop offset="0.5" stop-color="#4a80d0"/><stop offset="1" stop-color="#1f4a9a"/></linearGradient></defs><rect x="8.3" y="3" width="5.6" height="9.4" rx="2.4" fill="url(#g25)" stroke="#1a2a4a" stroke-width="0.7"/><circle cx="6" cy="11.2" r="3.6" fill="url(#g24)" stroke="#222" stroke-width="0.7"/><circle cx="3.4" cy="3.6" r="1.8" fill="#f6f08a" stroke="#8a8420" stroke-width="0.6"/></svg>
<span class="t" style="left:1681.5px;top:267.8px;color:#e8400d;text-shadow:none">Scene</span>
<div class="sep" style="left:1634px;top:290px;width:282px;height:2px;"></div>
<svg style="left:1642px;top:299px" width="9" height="8.6" viewBox="0 0 9 9" preserveAspectRatio="none"><path d="M0 0.2H9L4.5 8.9Z" fill="#7c7c7c"/></svg>
<span class="t pt" style="left:1654.7px;top:297.3px;">Render</span>
<svg style="left:1897px;top:296px" width="16" height="16" viewBox="0 0 16 16"><path d="M0 0L16 16M6 0L16 10M11 0L16 5" stroke="#4a4a4a" stroke-width="1" fill="none"/></svg>
<div class="b" style="left:1637px;top:323px;width:92px;height:20px;border-radius:4px 0 0 4px;"></div>
<div class="b" style="left:1728px;top:323px;width:93px;height:20px;border-radius:0;"></div>
<div class="b" style="left:1820px;top:323px;width:93px;height:20px;border-radius:0 4px 4px 0;"></div>
<span class="t" style="left:1673.5px;top:327.8px;">Render</span>
<span class="t" style="left:1756px;top:327.8px;">Animation</span>
<span class="t" style="left:1863px;top:327.8px;">Play</span>
<svg style="left:1640.5px;top:325px" width="16" height="16" viewBox="0 0 16 16"><defs><radialGradient id="g26" cx="0.35" cy="0.35" r="0.75"><stop offset="0" stop-color="#8a9ad0"/><stop offset="0.45" stop-color="#3a4a80"/><stop offset="0.7" stop-color="#7a2018"/><stop offset="1" stop-color="#d03828"/></radialGradient><linearGradient id="g27" x1="0" y1="0" x2="0" y2="1"><stop offset="0" stop-color="#f4f4f4"/><stop offset="1" stop-color="#a8a8a8"/></linearGradient></defs><path d="M1.3 5H3.4L4.2 3.6H8L8.8 5H14.7V13.7H1.3Z" fill="url(#g27)" stroke="#141414" stroke-width="1.1" stroke-linejoin="round"/><rect x="2.6" y="7.2" width="1.5" height="5.6" fill="#1e1e1e"/><rect x="12.6" y="7.2" width="1.2" height="5.6" fill="#2a2a2a"/><rect x="10.6" y="5.4" width="2.6" height="1" fill="#3a4a7a"/><circle cx="8.6" cy="10" r="2.9" fill="url(#g26)" stroke="#2a2a2a" stroke-width="0.7"/><circle cx="3.8" cy="6.2" r="0.8" fill="#f01818"/><circle cx="12.6" cy="3.4" r="3" fill="#f5d020"/><path d="M12.6 1.2V5.6M10.4 3.4H14.8" stroke="#fff" stroke-width="1.2"/></svg>
<svg style="left:1732px;top:324.5px" width="16" height="16" viewBox="0 0 16 16"><rect x="2.6" y="7.4" width="11.6" height="7" fill="#3a3a3a" stroke="#0c0c0c" stroke-width="1"/><rect x="3.4" y="8.2" width="10" height="2" fill="#e8e8e8"/><rect x="4.4" y="11.6" width="8" height="1.6" fill="#777"/><path d="M2.4 6.6L13.6 1.6" stroke="#0c0c0c" stroke-width="2.6"/><path d="M3.6 6L12.8 2" stroke="#e8e8e8" stroke-width="1.2" stroke-dasharray="1.8 1.6"/><path d="M1.4 5L2.6 8.6" stroke="#6a9ae0" stroke-width="1.8"/></svg>
<svg style="left:1823.5px;top:325px" width="16" height="16" viewBox="0 0 16 16"><path d="M3 2V14L13.4 8Z" fill="#f4f4f4" stroke="#161616" stroke-width="0.9" stroke-linejoin="round"/></svg>
<span class="t lg" style="left:1644.5px;top:352.8px;">Display:</span>
<div class="b" style="left:1733px;top:348px;width:180px;height:20px;"></div>
<span class="t" style="left:1741px;top:352.8px;">Image Editor</span>
<svg style="left:1903px;top:352.0px" width="7" height="13" viewBox="0 0 7 13"><path d="M3.5 0.2L6.6 5.4H0.4Z M3.5 12.8L6.6 7.6H0.4Z" fill="#636363"/></svg>
<span class="t lg" style="left:1644.5px;top:377.8px;">Feature Set:</span>
<div class="b" style="left:1733px;top:373px;width:180px;height:20px;"></div>
<span class="t" style="left:1741px;top:377.8px;">Supported</span>
<svg style="left:1903px;top:377.0px" width="7" height="13" viewBox="0 0 7 13"><path d="M3.5 0.2L6.6 5.4H0.4Z M3.5 12.8L6.6 7.6H0.4Z" fill="#636363"/></svg>
<div class="cb" style="left:1641px;top:402px;width:13px;height:13px;"></div>
<span class="t tight" style="left:1662.5px;top:402.8px;">Open Shading Language</span>
<div class="sep" style="left:1634px;top:426px;width:282px;height:2px;"></div>
<svg style="left:1642px;top:434px" width="9" height="8.6" viewBox="0 0 9 9" preserveAspectRatio="none"><path d="M0 0.2H9L4.5 8.9Z" fill="#7c7c7c"/></svg>
<span class="t pt" style="left:1654.7px;top:432.3px;">Dimensions</span>
<svg style="left:1897px;top:431px" width="16" height="16" viewBox="0 0 16 16"><path d="M0 0L16 16M6 0L16 10M11 0L16 5" stroke="#4a4a4a" stroke-width="1" fill="none"/></svg>
<div class="b" style="left:1637px;top:458px;width:235px;height:20px;border-radius:4px 0 0 4px;"></div>
<span class="t" style="left:1644.5px;top:462.8px;">Render Presets</span>
<svg style="left:1863px;top:462px" width="7" height="13" viewBox="0 0 7 13"><path d="M3.5 0.2L6.6 5.4H0.4Z M3.5 12.8L6.6 7.6H0.4Z" fill="#636363"/></svg>
<div class="b" style="left:1871px;top:458px;width:22px;height:20px;border-radius:0;"></div>
<div class="b" style="left:1892px;top:458px;width:21px;height:20px;border-radius:0 4px 4px 0;"></div>
<svg style="left:1876px;top:462px" width="12" height="12" viewBox="0 0 12 12"><path d="M6 1V11M1 6H11" stroke="#fff" stroke-width="2"/></svg>
<svg style="left:1896.5px;top:462px" width="12" height="12" viewBox="0 0 12 12"><path d="M1 6H11" stroke="#fff" stroke-width="2"/></svg>
<span class="t lg" style="left:1644.5px;top:487.8px;">Resolution:</span>
<span class="t lg" style="left:1787px;top:487.8px;">Frame Range:</span>
<div class="n" style="left:1637px;top:503px;width:134px;height:20px;border-radius:10px 10px 0 0;"></div>
<span class="t" style="left:1637px;top:507.8px;width:134px;text-align:center">X: 1920</span>
<svg style="left:1644px;top:509.5px" width="4" height="7" viewBox="0 0 4 7"><path d="M4 0L0 3.5L4 7Z" fill="#707070"/></svg>
<svg style="left:1759px;top:509.5px" width="4" height="7" viewBox="0 0 4 7"><path d="M0 0L4 3.5L0 7Z" fill="#707070"/></svg>
<div class="n" style="left:1637px;top:522px;width:134px;height:21px;border-radius:0;"></div>
<span class="t" style="left:1637px;top:527.8px;width:134px;text-align:center">Y: 1080</span>
<svg style="left:1644px;top:529.0px" width="4" height="7" viewBox="0 0 4 7"><path d="M4 0L0 3.5L4 7Z" fill="#707070"/></svg>
<svg style="left:1759px;top:529.0px" width="4" height="7" viewBox="0 0 4 7"><path d="M0 0L4 3.5L0 7Z" fill="#707070"/></svg>
<div class="n" style="left:1637px;top:542px;width:134px;height:21px;background:linear-gradient(90deg,#3c3c3c 0,#3c3c3c 52.5%,#5e5e69 52.5%,#5e5e69 100%);border-radius:0 0 10px 10px;"></div>
<span class="t" style="left:1637px;top:547.8px;width:134px;text-align:center">50%</span>
<div class="n" style="left:1779px;top:503px;width:134px;height:20px;border-radius:10px 10px 0 0;"></div>
<span class="t" style="left:1779px;top:507.8px;width:134px;text-align:center">Start Frame: 1</span>
<svg style="left:1786px;top:509.5px" width="4" height="7" viewBox="0 0 4 7"><path d="M4 0L0 3.5L4 7Z" fill="#707070"/></svg>
<svg style="left:1901px;top:509.5px" width="4" height="7" viewBox="0 0 4 7"><path d="M0 0L4 3.5L0 7Z" fill="#707070"/></svg>
<div class="n" style="left:1779px;top:522px;width:134px;height:21px;border-radius:0;"></div>
<span class="t" style="left:1779px;top:527.8px;width:134px;text-align:center">End Frame: 250</span>
<svg style="left:1786px;top:529.0px" width="4" height="7" viewBox="0 0 4 7"><path d="M4 0L0 3.5L4 7Z" fill="#707070"/></svg>
<svg style="left:1901px;top:529.0px" width="4" height="7" viewBox="0 0 4 7"><path d="M0 0L4 3.5L0 7Z" fill="#707070"/></svg>
<div class="n" style="left:1779px;top:542px;width:134px;height:21px;border-radius:0 0 10px 10px;"></div>
<span class="t" style="left:1779px;top:547.8px;width:134px;text-align:center">Frame Step: 1</span>
<svg style="left:1786px;top:549.0px" width="4" height="7" viewBox="0 0 4 7"><path d="M4 0L0 3.5L4 7Z" fill="#707070"/></svg>
<svg style="left:1901px;top:549.0px" width="4" height="7" viewBox="0 0 4 7"><path d="M0 0L4 3.5L0 7Z" fill="#707070"/></svg>
<span class="t lg" style="left:1644.5px;top:567.8px;">Aspect Ratio:</span>
<span class="t lg" style="left:1787px;top:567.8px;">Frame Rate:</span>
<div class="n" style="left:1637px;top:583px;width:134px;height:20px;border-radius:10px 10px 0 0;"></div>
<span class="t" style="left:1637px;top:587.8px;width:134px;text-align:center">X: 1.000</span>
<svg style="left:1644px;top:589.5px" width="4" height="7" viewBox="0 0 4 7"><path d="M4 0L0 3.5L4 7Z" fill="#707070"/></svg>
<svg style="left:1759px;top:589.5px" width="4" height="7" viewBox="0 0 4 7"><path d="M0 0L4 3.5L0 7Z" fill="#707070"/></svg>
<div class="n" style="left:1637px;top:602px;width:134px;height:21px;border-radius:0 0 10px 10px;"></div>
<span class="t" style="left:1637px;top:607.8px;width:134px;text-align:center">Y: 1.000</span>
<svg style="left:1644px;top:609.0px" width="4" height="7" viewBox="0 0 4 7"><path d="M4 0L0 3.5L4 7Z" fill="#707070"/></svg>
<svg style="left:1759px;top:609.0px" width="4" height="7" viewBox="0 0 4 7"><path d="M0 0L4 3.5L0 7Z" fill="#707070"/></svg>
<div class="b" style="left:1779px;top:583px;width:134px;height:20px;"></div>
<span class="t" style="left:1787px;top:587.8px;">24 fps</span>
<svg style="left:1903px;top:587.0px" width="7" height="13" viewBox="0 0 7 13"><path d="M3.5 0.2L6.6 5.4H0.4Z M3.5 12.8L6.6 7.6H0.4Z" fill="#636363"/></svg>
<span class="t lg" style="left:1787px;top:607.8px;">Time Remapping:</span>
<div class="cb" style="left:1641px;top:629px;width:13px;height:13px;"></div>
<span class="t" style="left:1662.5px;top:629.8px;">Border</span>
<div class="cb" style="left:1712px;top:629px;width:13px;height:13px;"></div>
<span class="t g" style="left:1733.5px;top:629.8px;">Crop</span>
<div class="n" style="left:1779px;top:623px;width:67px;height:20px;border-radius:10px 0 0 10px;"></div>
<span class="t" style="left:1779px;top:627.8px;width:67px;text-align:center">Old: 100</span>
<svg style="left:1786px;top:629.5px" width="4" height="7" viewBox="0 0 4 7"><path d="M4 0L0 3.5L4 7Z" fill="#707070"/></svg>
<svg style="left:1834px;top:629.5px" width="4" height="7" viewBox="0 0 4 7"><path d="M0 0L4 3.5L0 7Z" fill="#707070"/></svg>
<div class="n" style="left:1845px;top:623px;width:68px;height:20px;border-radius:0 10px 10px 0;"></div>
<span class="t" style="left:1845px;top:627.8px;width:68px;text-align:center">Ne: 100</span>
<svg style="left:1852px;top:629.5px" width="4" height="7" viewBox="0 0 4 7"><path d="M4 0L0 3.5L4 7Z" fill="#707070"/></svg>
<svg style="left:1901px;top:629.5px" width="4" height="7" viewBox="0 0 4 7"><path d="M0 0L4 3.5L0 7Z" fill="#707070"/></svg>
<div class="sep" style="left:1634px;top:653px;width:282px;height:2px;"></div>
<svg style="left:1642px;top:661px" width="9" height="8.6" viewBox="0 0 9 9" preserveAspectRatio="none"><path d="M0.2 0V9L8.9 4.5Z" fill="#7c7c7c"/></svg>
<div class="cb" style="left:1655px;top:659px;width:13px;height:13px;"></div>
<span class="t pt" style="left:1674.5px;top:659.3px;">Stamp</span>
<svg style="left:1897px;top:658px" width="16" height="16" viewBox="0 0 16 16"><path d="M0 0L16 16M6 0L16 10M11 0L16 5" stroke="#4a4a4a" stroke-width="1" fill="none"/></svg>
<div class="sep" style="left:1634px;top:677px;width:282px;height:2px;"></div>
<svg style="left:1642px;top:685px" width="9" height="8.6" viewBox="0 0 9 9" preserveAspectRatio="none"><path d="M0.2 0V9L8.9 4.5Z" fill="#7c7c7c"/></svg>
<span class="t pt" style="left:1654.7px;top:683.3px;">Output</span>
<svg style="left:1897px;top:682px" width="16" height="16" viewBox="0 0 16 16"><path d="M0 0L16 16M6 0L16 10M11 0L16 5" stroke="#4a4a4a" stroke-width="1" fill="none"/></svg>
<div class="sep" style="left:1634px;top:701px;width:282px;height:2px;"></div>
<svg style="left:1642px;top:709px" width="9" height="8.6" viewBox="0 0 9 9" preserveAspectRatio="none"><path d="M0 0.2H9L4.5 8.9Z" fill="#7c7c7c"/></svg>
<span class="t pt" style="left:1654.7px;top:707.3px;">Sampling</span>
<svg style="left:1897px;top:706px" width="16" height="16" viewBox="0 0 16 16"><path d="M0 0L16 16M6 0L16 10M11 0L16 5" stroke="#4a4a4a" stroke-width="1" fill="none"/></svg>
<div class="b" style="left:1637px;top:733px;width:235px;height:20px;border-radius:4px 0 0 4px;"></div>
<span class="t" style="left:1644.5px;top:737.8px;">Sampling Presets</span>
<svg style="left:1863px;top:737px" width="7" height="13" viewBox="0 0 7 13"><path d="M3.5 0.2L6.6 5.4H0.4Z M3.5 12.8L6.6 7.6H0.4Z" fill="#636363"/></svg>
<div class="b" style="left:1871px;top:733px;width:22px;height:20px;border-radius:0;"></div>
<div class="b" style="left:1892px;top:733px;width:21px;height:20px;border-radius:0 4px 4px 0;"></div>
<svg style="left:1876px;top:737px" width="12" height="12" viewBox="0 0 12 12"><path d="M6 1V11M1 6H11" stroke="#fff" stroke-width="2"/></svg>
<svg style="left:1896.5px;top:737px" width="12" height="12" viewBox="0 0 12 12"><path d="M1 6H11" stroke="#fff" stroke-width="2"/></svg>
<div class="b" style="left:1637px;top:758px;width:134px;height:20px;"></div>
<span class="t" style="left:1644.5px;top:762.8px;">Path Tracing</span>
<svg style="left:1761px;top:762.0px" width="7" height="13" viewBox="0 0 7 13"><path d="M3.5 0.2L6.6 5.4H0.4Z M3.5 12.8L6.6 7.6H0.4Z" fill="#636363"/></svg>
<div class="cb" style="left:1783px;top:762px;width:13px;height:13px;"></div>
<span class="t" style="left:1804.5px;top:762.8px;">Square Samples</span>
<span class="t lg" style="left:1644.5px;top:787.8px;">Settings:</span>
<span class="t lg" style="left:1787px;top:787.8px;">Samples:</span>
<div class="n" style="left:1637px;top:803px;width:134px;height:20px;border-radius:10px 10px 0 0;"></div>
<span class="t" style="left:1637px;top:807.8px;width:134px;text-align:center">Seed: 0</span>
<svg style="left:1644px;top:809.5px" width="4" height="7" viewBox="0 0 4 7"><path d="M4 0L0 3.5L4 7Z" fill="#707070"/></svg>
<svg style="left:1759px;top:809.5px" width="4" height="7" viewBox="0 0 4 7"><path d="M0 0L4 3.5L0 7Z" fill="#707070"/></svg>
<div class="n" style="left:1637px;top:822px;width:134px;height:21px;border-radius:0 0 10px 10px;"></div>
<span class="t" style="left:1637px;top:827.8px;width:134px;text-align:center">Clamp: 0.00</span>
<svg style="left:1644px;top:829.0px" width="4" height="7" viewBox="0 0 4 7"><path d="M4 0L0 3.5L4 7Z" fill="#707070"/></svg>
<svg style="left:1759px;top:829.0px" width="4" height="7" viewBox="0 0 4 7"><path d="M0 0L4 3.5L0 7Z" fill="#707070"/></svg>
<div class="n" style="left:1779px;top:803px;width:134px;height:20px;border-radius:10px 10px 0 0;"></div>
<span class="t" style="left:1779px;top:807.8px;width:134px;text-align:center">Render: 10</span>
<svg style="left:1786px;top:809.5px" width="4" height="7" viewBox="0 0 4 7"><path d="M4 0L0 3.5L4 7Z" fill="#707070"/></svg>
<svg style="left:1901px;top:809.5px" width="4" height="7" viewBox="0 0 4 7"><path d="M0 0L4 3.5L0 7Z" fill="#707070"/></svg>
<div class="n" style="left:1779px;top:822px;width:134px;height:21px;border-radius:0 0 10px 10px;"></div>
<span class="t" style="left:1779px;top:827.8px;width:134px;text-align:center">Preview: 100</span>
<svg style="left:1786px;top:829.0px" width="4" height="7" viewBox="0 0 4 7"><path d="M4 0L0 3.5L4 7Z" fill="#707070"/></svg>
<svg style="left:1901px;top:829.0px" width="4" height="7" viewBox="0 0 4 7"><path d="M0 0L4 3.5L0 7Z" fill="#707070"/></svg>
<div class="sep" style="left:1634px;top:851px;width:282px;height:2px;"></div>
<svg style="left:1642px;top:859px" width="9" height="8.6" viewBox="0 0 9 9" preserveAspectRatio="none"><path d="M0.2 0V9L8.9 4.5Z" fill="#7c7c7c"/></svg>
<span class="t pt" style="left:1654.7px;top:857.3px;">Light Paths</span>
<svg style="left:1897px;top:856px" width="16" height="16" viewBox="0 0 16 16"><path d="M0 0L16 16M6 0L16 10M11 0L16 5" stroke="#4a4a4a" stroke-width="1" fill="none"/></svg>
<div class="sep" style="left:1634px;top:875px;width:282px;height:2px;"></div>
<svg style="left:1642px;top:883px" width="9" height="8.6" viewBox="0 0 9 9" preserveAspectRatio="none"><path d="M0.2 0V9L8.9 4.5Z" fill="#7c7c7c"/></svg>
<div class="cb" style="left:1655px;top:881px;width:13px;height:13px;"></div>
<span class="t pt" style="left:1674.5px;top:881.3px;">Motion Blur</span>
<svg style="left:1897px;top:880px" width="16" height="16" viewBox="0 0 16 16"><path d="M0 0L16 16M6 0L16 10M11 0L16 5" stroke="#4a4a4a" stroke-width="1" fill="none"/></svg>
<div class="sep" style="left:1634px;top:899px;width:282px;height:2px;"></div>
<svg style="left:1642px;top:907px" width="9" height="8.6" viewBox="0 0 9 9" preserveAspectRatio="none"><path d="M0 0.2H9L4.5 8.9Z" fill="#7c7c7c"/></svg>
<span class="t pt" style="left:1654.7px;top:905.3px;">Film</span>
<svg style="left:1897px;top:904px" width="16" height="16" viewBox="0 0 16 16"><path d="M0 0L16 16M6 0L16 10M11 0L16 5" stroke="#4a4a4a" stroke-width="1" fill="none"/></svg>
<div class="n" style="left:1637px;top:931px;width:134px;height:20px;border-radius:10px;"></div>
<span class="t" style="left:1637px;top:935.8px;width:134px;text-align:center">Exposure: 1.00</span>
<svg style="left:1644px;top:937.5px" width="4" height="7" viewBox="0 0 4 7"><path d="M4 0L0 3.5L4 7Z" fill="#707070"/></svg>
<svg style="left:1759px;top:937.5px" width="4" height="7" viewBox="0 0 4 7"><path d="M0 0L4 3.5L0 7Z" fill="#707070"/></svg>
<div class="b" style="left:1779px;top:931px;width:134px;height:20px;border-radius:4px 4px 0 0;"></div>
<span class="t" style="left:1787px;top:935.8px;">Gaussian</span>
<svg style="left:1903px;top:935.0px" width="7" height="13" viewBox="0 0 7 13"><path d="M3.5 0.2L6.6 5.4H0.4Z M3.5 12.8L6.6 7.6H0.4Z" fill="#636363"/></svg>
<div class="n" style="left:1779px;top:950px;width:134px;height:21px;border-radius:0 0 10px 10px;"></div>
<span class="t" style="left:1779px;top:955.8px;width:134px;text-align:center">Width: 1.50</span>
<svg style="left:1786px;top:957.0px" width="4" height="7" viewBox="0 0 4 7"><path d="M4 0L0 3.5L4 7Z" fill="#707070"/></svg>
<svg style="left:1901px;top:957.0px" width="4" height="7" viewBox="0 0 4 7"><path d="M0 0L4 3.5L0 7Z" fill="#707070"/></svg>
<div class="cb" style="left:1641px;top:957px;width:13px;height:13px;"></div>
<span class="t" style="left:1662.5px;top:957.8px;">Transparent</span>
<div class="sep" style="left:1634px;top:980px;width:282px;height:2px;"></div>
<svg style="left:1642px;top:989px" width="9" height="8.6" viewBox="0 0 9 9" preserveAspectRatio="none"><path d="M0.2 0V9L8.9 4.5Z" fill="#7c7c7c"/></svg>
<span class="t pt" style="left:1654.7px;top:987.3px;">Performance</span>
<svg style="left:1897px;top:986px" width="16" height="16" viewBox="0 0 16 16"><path d="M0 0L16 16M6 0L16 10M11 0L16 5" stroke="#4a4a4a" stroke-width="1" fill="none"/></svg>
<div class="sep" style="left:1634px;top:1004px;width:282px;height:2px;"></div>
<svg style="left:1642px;top:1013px" width="9" height="8.6" viewBox="0 0 9 9" preserveAspectRatio="none"><path d="M0.2 0V9L8.9 4.5Z" fill="#7c7c7c"/></svg>
<span class="t pt" style="left:1654.7px;top:1011.3px;">OpenGL Render</span>
<svg style="left:1897px;top:1010px" width="16" height="16" viewBox="0 0 16 16"><path d="M0 0L16 16M6 0L16 10M11 0L16 5" stroke="#4a4a4a" stroke-width="1" fill="none"/></svg>
<div class="sep" style="left:1634px;top:1028px;width:282px;height:2px;"></div>
<svg style="left:1642px;top:1037px" width="9" height="8.6" viewBox="0 0 9 9" preserveAspectRatio="none"><path d="M0.2 0V9L8.9 4.5Z" fill="#7c7c7c"/></svg>
<span class="t pt" style="left:1654.7px;top:1035.3px;">Post Processing</span>
<svg style="left:1897px;top:1034px" width="16" height="16" viewBox="0 0 16 16"><path d="M0 0L16 16M6 0L16 10M11 0L16 5" stroke="#4a4a4a" stroke-width="1" fill="none"/></svg>
<svg style="left:1909px;top:27px" width="11" height="11" viewBox="0 0 11 11"><path d="M0.5 0L11 10.5M4 0L11 7M7.5 0L11 3.5" stroke="#7a7a7a" stroke-width="1" fill="none"/><path d="M2.2 0L11 8.8M5.7 0L11 5.3" stroke="#161616" stroke-width="1" fill="none" opacity=".55"/></svg>
<svg style="left:1px;top:41px" width="11" height="11" viewBox="0 0 11 11"><path d="M0 0.5L10.5 11M0 4L7 11M0 7.5L3.5 11" stroke="#7a7a7a" stroke-width="1" fill="none"/><path d="M0 2.2L8.8 11M0 5.7L5.3 11" stroke="#161616" stroke-width="1" fill="none" opacity=".55"/></svg>
<svg style="left:1617px;top:53px" width="11" height="11" viewBox="0 0 11 11"><path d="M0.5 0L11 10.5M4 0L11 7M7.5 0L11 3.5" stroke="#7a7a7a" stroke-width="1" fill="none"/><path d="M2.2 0L11 8.8M5.7 0L11 5.3" stroke="#161616" stroke-width="1" fill="none" opacity=".55"/></svg>
<svg style="left:1px;top:990px" width="11" height="11" viewBox="0 0 11 11"><path d="M0 0.5L10.5 11M0 4L7 11M0 7.5L3.5 11" stroke="#7a7a7a" stroke-width="1" fill="none"/><path d="M0 2.2L8.8 11M0 5.7L5.3 11" stroke="#161616" stroke-width="1" fill="none" opacity=".55"/></svg>
<svg style="left:1617px;top:1002px" width="11" height="11" viewBox="0 0 11 11"><path d="M0.5 0L11 10.5M4 0L11 7M7.5 0L11 3.5" stroke="#7a7a7a" stroke-width="1" fill="none"/><path d="M2.2 0L11 8.8M5.7 0L11 5.3" stroke="#161616" stroke-width="1" fill="none" opacity=".55"/></svg>
<svg style="left:1px;top:1067px" width="11" height="11" viewBox="0 0 11 11"><path d="M0 0.5L10.5 11M0 4L7 11M0 7.5L3.5 11" stroke="#7a7a7a" stroke-width="1" fill="none"/><path d="M0 2.2L8.8 11M0 5.7L5.3 11" stroke="#161616" stroke-width="1" fill="none" opacity=".55"/></svg>
<svg style="left:1909px;top:53px" width="11" height="11" viewBox="0 0 11 11"><path d="M0.5 0L11 10.5M4 0L11 7M7.5 0L11 3.5" stroke="#7a7a7a" stroke-width="1" fill="none"/><path d="M2.2 0L11 8.8M5.7 0L11 5.3" stroke="#161616" stroke-width="1" fill="none" opacity=".55"/></svg>
<svg style="left:1629px;top:217px" width="11" height="11" viewBox="0 0 11 11"><path d="M0 0.5L10.5 11M0 4L7 11M0 7.5L3.5 11" stroke="#7a7a7a" stroke-width="1" fill="none"/><path d="M0 2.2L8.8 11M0 5.7L5.3 11" stroke="#161616" stroke-width="1" fill="none" opacity=".55"/></svg>
<svg style="left:1909px;top:230px" width="11" height="11" viewBox="0 0 11 11"><path d="M0.5 0L11 10.5M4 0L11 7M7.5 0L11 3.5" stroke="#7a7a7a" stroke-width="1" fill="none"/><path d="M2.2 0L11 8.8M5.7 0L11 5.3" stroke="#161616" stroke-width="1" fill="none" opacity=".55"/></svg>
<svg style="left:1629px;top:1067px" width="11" height="11" viewBox="0 0 11 11"><path d="M0 0.5L10.5 11M0 4L7 11M0 7.5L3.5 11" stroke="#7a7a7a" stroke-width="1" fill="none"/><path d="M0 2.2L8.8 11M0 5.7L5.3 11" stroke="#161616" stroke-width="1" fill="none" opacity=".55"/></svg>
<div style="left:0px;top:22px;width:1px;height:1057px;background:#565656"></div>
</div>
</body></html>
